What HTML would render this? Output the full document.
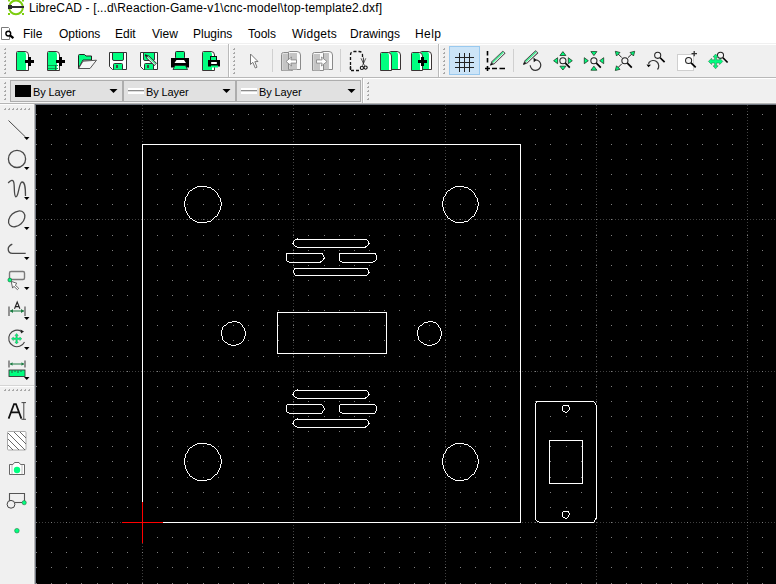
<!DOCTYPE html>
<html><head><meta charset="utf-8">
<style>
*{margin:0;padding:0;box-sizing:border-box}
html,body{width:776px;height:584px;overflow:hidden;background:#f0f0f0;font-family:"Liberation Sans",sans-serif;color:#000}
.a{position:absolute}
.t{position:absolute;white-space:pre;font-size:12px;line-height:14px}
.cb{position:absolute;top:80px;height:22px;background:#e1e1e1;border:1px solid #adadad}
.cbt{position:absolute;white-space:pre;font-size:11px;line-height:13px;top:86px;letter-spacing:-0.12px}
svg{position:absolute;left:0;top:0}
</style></head><body>
<!-- title + menu white band -->
<div class="a" style="left:0;top:0;width:776px;height:43px;background:#fff"></div>
<div class="a" style="left:0;top:44px;width:776px;height:1px;background:#fff"></div>
<div class="a" style="left:0;top:77px;width:776px;height:1px;background:#b8b8b8"></div>
<div class="a" style="left:0;top:78px;width:776px;height:1px;background:#fff"></div>
<div class="a" style="left:0;top:102px;width:776px;height:1px;background:#f5f5f5"></div>
<div class="a" style="left:0;top:103px;width:776px;height:1px;background:#b5b5b5"></div>
<div class="t" style="left:29px;top:1px;letter-spacing:0.135px">LibreCAD - [...d\Reaction-Game-v1\cnc-model\top-template2.dxf]</div>
<div class="t" style="left:23px;top:27px">File</div>
<div class="t" style="left:59px;top:27px">Options</div>
<div class="t" style="left:115px;top:27px">Edit</div>
<div class="t" style="left:152px;top:27px">View</div>
<div class="t" style="left:193px;top:27px">Plugins</div>
<div class="t" style="left:248px;top:27px">Tools</div>
<div class="t" style="left:292px;top:27px;letter-spacing:0.25px">Widgets</div>
<div class="t" style="left:350px;top:27px">Drawings</div>
<div class="t" style="left:415px;top:27px;letter-spacing:0.45px">Help</div>
<!-- toolbar separators -->
<div class="a" style="left:228px;top:44px;width:1px;height:33px;background:#bababa"></div>
<div class="a" style="left:229px;top:45px;width:1px;height:32px;background:#fff"></div>
<div class="a" style="left:438px;top:44px;width:1px;height:33px;background:#bababa"></div>
<div class="a" style="left:439px;top:45px;width:1px;height:32px;background:#fff"></div>
<div class="a" style="left:362px;top:78px;width:1px;height:25px;background:#bababa"></div>
<div class="a" style="left:363px;top:79px;width:1px;height:24px;background:#fff"></div>
<div class="a" style="left:272px;top:49px;width:1px;height:23px;background:#d0d0d0"></div>
<div class="a" style="left:340px;top:49px;width:1px;height:23px;background:#d0d0d0"></div>
<div class="a" style="left:513px;top:49px;width:1px;height:23px;background:#d0d0d0"></div>
<!-- grid button checked -->
<div class="a" style="left:449px;top:46px;width:31px;height:29px;background:#cce4f7;border:1px solid #99c9ef"></div>
<!-- combos -->
<div class="cb" style="left:10px;width:113px"></div>
<div class="cb" style="left:123px;width:113px"></div>
<div class="cb" style="left:236px;width:125px"></div>
<div class="a" style="left:15px;top:85px;width:16px;height:12px;background:#000"></div>
<div class="cbt" style="left:33px">By Layer</div>
<div class="cbt" style="left:146px">By Layer</div>
<div class="cbt" style="left:259px">By Layer</div>
<!-- left toolbar + canvas frame -->
<div class="a" style="left:0;top:104px;width:35px;height:480px;background:#f0f0f0"></div>
<div class="a" style="left:0;top:104px;width:34px;height:1px;background:#fdfdfd"></div>
<div class="a" style="left:33px;top:104px;width:1px;height:480px;background:#f6f6f6"></div>
<div class="a" style="left:34px;top:104px;width:1px;height:480px;background:#b9b9b9"></div>
<div class="a" style="left:0;top:385px;width:34px;height:1px;background:#d5d5d5"></div>
<div class="a" style="left:0;top:386px;width:34px;height:1px;background:#fdfdfd"></div>
<div class="a" style="left:35px;top:104px;width:741px;height:480px;background:#727882"></div>
<div class="a" style="left:36px;top:105px;width:740px;height:479px;background:#000"></div>
<svg width="776" height="584" viewBox="0 0 776 584" shape-rendering="crispEdges">
<path fill="#404040" d="M142 105h1v1h-1zM142 108h1v1h-1zM142 111h1v1h-1zM142 114h1v1h-1zM142 117h1v1h-1zM142 120h1v1h-1zM142 123h1v1h-1zM142 126h1v1h-1zM142 129h1v1h-1zM142 132h1v1h-1zM142 135h1v1h-1zM142 138h1v1h-1zM142 141h1v1h-1zM142 144h1v1h-1zM142 147h1v1h-1zM142 150h1v1h-1zM142 153h1v1h-1zM142 156h1v1h-1zM142 159h1v1h-1zM142 162h1v1h-1zM142 165h1v1h-1zM142 168h1v1h-1zM142 171h1v1h-1zM142 174h1v1h-1zM142 177h1v1h-1zM142 180h1v1h-1zM142 183h1v1h-1zM142 186h1v1h-1zM142 189h1v1h-1zM142 192h1v1h-1zM142 195h1v1h-1zM142 198h1v1h-1zM142 201h1v1h-1zM142 204h1v1h-1zM142 207h1v1h-1zM142 210h1v1h-1zM142 213h1v1h-1zM142 216h1v1h-1zM142 219h1v1h-1zM142 222h1v1h-1zM142 225h1v1h-1zM142 228h1v1h-1zM142 231h1v1h-1zM142 234h1v1h-1zM142 237h1v1h-1zM142 240h1v1h-1zM142 243h1v1h-1zM142 246h1v1h-1zM142 249h1v1h-1zM142 252h1v1h-1zM142 255h1v1h-1zM142 258h1v1h-1zM142 261h1v1h-1zM142 264h1v1h-1zM142 267h1v1h-1zM142 270h1v1h-1zM142 273h1v1h-1zM142 276h1v1h-1zM142 279h1v1h-1zM142 282h1v1h-1zM142 285h1v1h-1zM142 288h1v1h-1zM142 291h1v1h-1zM142 294h1v1h-1zM142 297h1v1h-1zM142 300h1v1h-1zM142 303h1v1h-1zM142 306h1v1h-1zM142 309h1v1h-1zM142 312h1v1h-1zM142 315h1v1h-1zM142 318h1v1h-1zM142 321h1v1h-1zM142 324h1v1h-1zM142 327h1v1h-1zM142 330h1v1h-1zM142 333h1v1h-1zM142 336h1v1h-1zM142 339h1v1h-1zM142 342h1v1h-1zM142 345h1v1h-1zM142 348h1v1h-1zM142 351h1v1h-1zM142 354h1v1h-1zM142 357h1v1h-1zM142 360h1v1h-1zM142 363h1v1h-1zM142 366h1v1h-1zM142 369h1v1h-1zM142 372h1v1h-1zM142 375h1v1h-1zM142 378h1v1h-1zM142 381h1v1h-1zM142 384h1v1h-1zM142 387h1v1h-1zM142 390h1v1h-1zM142 393h1v1h-1zM142 396h1v1h-1zM142 399h1v1h-1zM142 402h1v1h-1zM142 405h1v1h-1zM142 408h1v1h-1zM142 411h1v1h-1zM142 414h1v1h-1zM142 417h1v1h-1zM142 420h1v1h-1zM142 423h1v1h-1zM142 426h1v1h-1zM142 429h1v1h-1zM142 432h1v1h-1zM142 435h1v1h-1zM142 438h1v1h-1zM142 441h1v1h-1zM142 444h1v1h-1zM142 447h1v1h-1zM142 450h1v1h-1zM142 453h1v1h-1zM142 456h1v1h-1zM142 459h1v1h-1zM142 462h1v1h-1zM142 465h1v1h-1zM142 468h1v1h-1zM142 471h1v1h-1zM142 474h1v1h-1zM142 477h1v1h-1zM142 480h1v1h-1zM142 483h1v1h-1zM142 486h1v1h-1zM142 489h1v1h-1zM142 492h1v1h-1zM142 495h1v1h-1zM142 498h1v1h-1zM142 501h1v1h-1zM142 504h1v1h-1zM142 507h1v1h-1zM142 510h1v1h-1zM142 513h1v1h-1zM142 516h1v1h-1zM142 519h1v1h-1zM142 522h1v1h-1zM142 525h1v1h-1zM142 528h1v1h-1zM142 531h1v1h-1zM142 534h1v1h-1zM142 537h1v1h-1zM142 540h1v1h-1zM142 543h1v1h-1zM142 546h1v1h-1zM142 549h1v1h-1zM142 552h1v1h-1zM142 555h1v1h-1zM142 558h1v1h-1zM142 561h1v1h-1zM142 564h1v1h-1zM142 567h1v1h-1zM142 570h1v1h-1zM142 573h1v1h-1zM142 576h1v1h-1zM142 579h1v1h-1zM142 582h1v1h-1zM293 105h1v1h-1zM293 108h1v1h-1zM293 111h1v1h-1zM293 114h1v1h-1zM293 117h1v1h-1zM293 120h1v1h-1zM293 123h1v1h-1zM293 126h1v1h-1zM293 129h1v1h-1zM293 132h1v1h-1zM293 135h1v1h-1zM293 138h1v1h-1zM293 141h1v1h-1zM293 144h1v1h-1zM293 147h1v1h-1zM293 150h1v1h-1zM293 153h1v1h-1zM293 156h1v1h-1zM293 159h1v1h-1zM293 162h1v1h-1zM293 165h1v1h-1zM293 168h1v1h-1zM293 171h1v1h-1zM293 174h1v1h-1zM293 177h1v1h-1zM293 180h1v1h-1zM293 183h1v1h-1zM293 186h1v1h-1zM293 189h1v1h-1zM293 192h1v1h-1zM293 195h1v1h-1zM293 198h1v1h-1zM293 201h1v1h-1zM293 204h1v1h-1zM293 207h1v1h-1zM293 210h1v1h-1zM293 213h1v1h-1zM293 216h1v1h-1zM293 219h1v1h-1zM293 222h1v1h-1zM293 225h1v1h-1zM293 228h1v1h-1zM293 231h1v1h-1zM293 234h1v1h-1zM293 237h1v1h-1zM293 240h1v1h-1zM293 243h1v1h-1zM293 246h1v1h-1zM293 249h1v1h-1zM293 252h1v1h-1zM293 255h1v1h-1zM293 258h1v1h-1zM293 261h1v1h-1zM293 264h1v1h-1zM293 267h1v1h-1zM293 270h1v1h-1zM293 273h1v1h-1zM293 276h1v1h-1zM293 279h1v1h-1zM293 282h1v1h-1zM293 285h1v1h-1zM293 288h1v1h-1zM293 291h1v1h-1zM293 294h1v1h-1zM293 297h1v1h-1zM293 300h1v1h-1zM293 303h1v1h-1zM293 306h1v1h-1zM293 309h1v1h-1zM293 312h1v1h-1zM293 315h1v1h-1zM293 318h1v1h-1zM293 321h1v1h-1zM293 324h1v1h-1zM293 327h1v1h-1zM293 330h1v1h-1zM293 333h1v1h-1zM293 336h1v1h-1zM293 339h1v1h-1zM293 342h1v1h-1zM293 345h1v1h-1zM293 348h1v1h-1zM293 351h1v1h-1zM293 354h1v1h-1zM293 357h1v1h-1zM293 360h1v1h-1zM293 363h1v1h-1zM293 366h1v1h-1zM293 369h1v1h-1zM293 372h1v1h-1zM293 375h1v1h-1zM293 378h1v1h-1zM293 381h1v1h-1zM293 384h1v1h-1zM293 387h1v1h-1zM293 390h1v1h-1zM293 393h1v1h-1zM293 396h1v1h-1zM293 399h1v1h-1zM293 402h1v1h-1zM293 405h1v1h-1zM293 408h1v1h-1zM293 411h1v1h-1zM293 414h1v1h-1zM293 417h1v1h-1zM293 420h1v1h-1zM293 423h1v1h-1zM293 426h1v1h-1zM293 429h1v1h-1zM293 432h1v1h-1zM293 435h1v1h-1zM293 438h1v1h-1zM293 441h1v1h-1zM293 444h1v1h-1zM293 447h1v1h-1zM293 450h1v1h-1zM293 453h1v1h-1zM293 456h1v1h-1zM293 459h1v1h-1zM293 462h1v1h-1zM293 465h1v1h-1zM293 468h1v1h-1zM293 471h1v1h-1zM293 474h1v1h-1zM293 477h1v1h-1zM293 480h1v1h-1zM293 483h1v1h-1zM293 486h1v1h-1zM293 489h1v1h-1zM293 492h1v1h-1zM293 495h1v1h-1zM293 498h1v1h-1zM293 501h1v1h-1zM293 504h1v1h-1zM293 507h1v1h-1zM293 510h1v1h-1zM293 513h1v1h-1zM293 516h1v1h-1zM293 519h1v1h-1zM293 522h1v1h-1zM293 525h1v1h-1zM293 528h1v1h-1zM293 531h1v1h-1zM293 534h1v1h-1zM293 537h1v1h-1zM293 540h1v1h-1zM293 543h1v1h-1zM293 546h1v1h-1zM293 549h1v1h-1zM293 552h1v1h-1zM293 555h1v1h-1zM293 558h1v1h-1zM293 561h1v1h-1zM293 564h1v1h-1zM293 567h1v1h-1zM293 570h1v1h-1zM293 573h1v1h-1zM293 576h1v1h-1zM293 579h1v1h-1zM293 582h1v1h-1zM445 105h1v1h-1zM445 108h1v1h-1zM445 111h1v1h-1zM445 114h1v1h-1zM445 117h1v1h-1zM445 120h1v1h-1zM445 123h1v1h-1zM445 126h1v1h-1zM445 129h1v1h-1zM445 132h1v1h-1zM445 135h1v1h-1zM445 138h1v1h-1zM445 141h1v1h-1zM445 144h1v1h-1zM445 147h1v1h-1zM445 150h1v1h-1zM445 153h1v1h-1zM445 156h1v1h-1zM445 159h1v1h-1zM445 162h1v1h-1zM445 165h1v1h-1zM445 168h1v1h-1zM445 171h1v1h-1zM445 174h1v1h-1zM445 177h1v1h-1zM445 180h1v1h-1zM445 183h1v1h-1zM445 186h1v1h-1zM445 189h1v1h-1zM445 192h1v1h-1zM445 195h1v1h-1zM445 198h1v1h-1zM445 201h1v1h-1zM445 204h1v1h-1zM445 207h1v1h-1zM445 210h1v1h-1zM445 213h1v1h-1zM445 216h1v1h-1zM445 219h1v1h-1zM445 222h1v1h-1zM445 225h1v1h-1zM445 228h1v1h-1zM445 231h1v1h-1zM445 234h1v1h-1zM445 237h1v1h-1zM445 240h1v1h-1zM445 243h1v1h-1zM445 246h1v1h-1zM445 249h1v1h-1zM445 252h1v1h-1zM445 255h1v1h-1zM445 258h1v1h-1zM445 261h1v1h-1zM445 264h1v1h-1zM445 267h1v1h-1zM445 270h1v1h-1zM445 273h1v1h-1zM445 276h1v1h-1zM445 279h1v1h-1zM445 282h1v1h-1zM445 285h1v1h-1zM445 288h1v1h-1zM445 291h1v1h-1zM445 294h1v1h-1zM445 297h1v1h-1zM445 300h1v1h-1zM445 303h1v1h-1zM445 306h1v1h-1zM445 309h1v1h-1zM445 312h1v1h-1zM445 315h1v1h-1zM445 318h1v1h-1zM445 321h1v1h-1zM445 324h1v1h-1zM445 327h1v1h-1zM445 330h1v1h-1zM445 333h1v1h-1zM445 336h1v1h-1zM445 339h1v1h-1zM445 342h1v1h-1zM445 345h1v1h-1zM445 348h1v1h-1zM445 351h1v1h-1zM445 354h1v1h-1zM445 357h1v1h-1zM445 360h1v1h-1zM445 363h1v1h-1zM445 366h1v1h-1zM445 369h1v1h-1zM445 372h1v1h-1zM445 375h1v1h-1zM445 378h1v1h-1zM445 381h1v1h-1zM445 384h1v1h-1zM445 387h1v1h-1zM445 390h1v1h-1zM445 393h1v1h-1zM445 396h1v1h-1zM445 399h1v1h-1zM445 402h1v1h-1zM445 405h1v1h-1zM445 408h1v1h-1zM445 411h1v1h-1zM445 414h1v1h-1zM445 417h1v1h-1zM445 420h1v1h-1zM445 423h1v1h-1zM445 426h1v1h-1zM445 429h1v1h-1zM445 432h1v1h-1zM445 435h1v1h-1zM445 438h1v1h-1zM445 441h1v1h-1zM445 444h1v1h-1zM445 447h1v1h-1zM445 450h1v1h-1zM445 453h1v1h-1zM445 456h1v1h-1zM445 459h1v1h-1zM445 462h1v1h-1zM445 465h1v1h-1zM445 468h1v1h-1zM445 471h1v1h-1zM445 474h1v1h-1zM445 477h1v1h-1zM445 480h1v1h-1zM445 483h1v1h-1zM445 486h1v1h-1zM445 489h1v1h-1zM445 492h1v1h-1zM445 495h1v1h-1zM445 498h1v1h-1zM445 501h1v1h-1zM445 504h1v1h-1zM445 507h1v1h-1zM445 510h1v1h-1zM445 513h1v1h-1zM445 516h1v1h-1zM445 519h1v1h-1zM445 522h1v1h-1zM445 525h1v1h-1zM445 528h1v1h-1zM445 531h1v1h-1zM445 534h1v1h-1zM445 537h1v1h-1zM445 540h1v1h-1zM445 543h1v1h-1zM445 546h1v1h-1zM445 549h1v1h-1zM445 552h1v1h-1zM445 555h1v1h-1zM445 558h1v1h-1zM445 561h1v1h-1zM445 564h1v1h-1zM445 567h1v1h-1zM445 570h1v1h-1zM445 573h1v1h-1zM445 576h1v1h-1zM445 579h1v1h-1zM445 582h1v1h-1zM596 105h1v1h-1zM596 108h1v1h-1zM596 111h1v1h-1zM596 114h1v1h-1zM596 117h1v1h-1zM596 120h1v1h-1zM596 123h1v1h-1zM596 126h1v1h-1zM596 129h1v1h-1zM596 132h1v1h-1zM596 135h1v1h-1zM596 138h1v1h-1zM596 141h1v1h-1zM596 144h1v1h-1zM596 147h1v1h-1zM596 150h1v1h-1zM596 153h1v1h-1zM596 156h1v1h-1zM596 159h1v1h-1zM596 162h1v1h-1zM596 165h1v1h-1zM596 168h1v1h-1zM596 171h1v1h-1zM596 174h1v1h-1zM596 177h1v1h-1zM596 180h1v1h-1zM596 183h1v1h-1zM596 186h1v1h-1zM596 189h1v1h-1zM596 192h1v1h-1zM596 195h1v1h-1zM596 198h1v1h-1zM596 201h1v1h-1zM596 204h1v1h-1zM596 207h1v1h-1zM596 210h1v1h-1zM596 213h1v1h-1zM596 216h1v1h-1zM596 219h1v1h-1zM596 222h1v1h-1zM596 225h1v1h-1zM596 228h1v1h-1zM596 231h1v1h-1zM596 234h1v1h-1zM596 237h1v1h-1zM596 240h1v1h-1zM596 243h1v1h-1zM596 246h1v1h-1zM596 249h1v1h-1zM596 252h1v1h-1zM596 255h1v1h-1zM596 258h1v1h-1zM596 261h1v1h-1zM596 264h1v1h-1zM596 267h1v1h-1zM596 270h1v1h-1zM596 273h1v1h-1zM596 276h1v1h-1zM596 279h1v1h-1zM596 282h1v1h-1zM596 285h1v1h-1zM596 288h1v1h-1zM596 291h1v1h-1zM596 294h1v1h-1zM596 297h1v1h-1zM596 300h1v1h-1zM596 303h1v1h-1zM596 306h1v1h-1zM596 309h1v1h-1zM596 312h1v1h-1zM596 315h1v1h-1zM596 318h1v1h-1zM596 321h1v1h-1zM596 324h1v1h-1zM596 327h1v1h-1zM596 330h1v1h-1zM596 333h1v1h-1zM596 336h1v1h-1zM596 339h1v1h-1zM596 342h1v1h-1zM596 345h1v1h-1zM596 348h1v1h-1zM596 351h1v1h-1zM596 354h1v1h-1zM596 357h1v1h-1zM596 360h1v1h-1zM596 363h1v1h-1zM596 366h1v1h-1zM596 369h1v1h-1zM596 372h1v1h-1zM596 375h1v1h-1zM596 378h1v1h-1zM596 381h1v1h-1zM596 384h1v1h-1zM596 387h1v1h-1zM596 390h1v1h-1zM596 393h1v1h-1zM596 396h1v1h-1zM596 399h1v1h-1zM596 402h1v1h-1zM596 405h1v1h-1zM596 408h1v1h-1zM596 411h1v1h-1zM596 414h1v1h-1zM596 417h1v1h-1zM596 420h1v1h-1zM596 423h1v1h-1zM596 426h1v1h-1zM596 429h1v1h-1zM596 432h1v1h-1zM596 435h1v1h-1zM596 438h1v1h-1zM596 441h1v1h-1zM596 444h1v1h-1zM596 447h1v1h-1zM596 450h1v1h-1zM596 453h1v1h-1zM596 456h1v1h-1zM596 459h1v1h-1zM596 462h1v1h-1zM596 465h1v1h-1zM596 468h1v1h-1zM596 471h1v1h-1zM596 474h1v1h-1zM596 477h1v1h-1zM596 480h1v1h-1zM596 483h1v1h-1zM596 486h1v1h-1zM596 489h1v1h-1zM596 492h1v1h-1zM596 495h1v1h-1zM596 498h1v1h-1zM596 501h1v1h-1zM596 504h1v1h-1zM596 507h1v1h-1zM596 510h1v1h-1zM596 513h1v1h-1zM596 516h1v1h-1zM596 519h1v1h-1zM596 522h1v1h-1zM596 525h1v1h-1zM596 528h1v1h-1zM596 531h1v1h-1zM596 534h1v1h-1zM596 537h1v1h-1zM596 540h1v1h-1zM596 543h1v1h-1zM596 546h1v1h-1zM596 549h1v1h-1zM596 552h1v1h-1zM596 555h1v1h-1zM596 558h1v1h-1zM596 561h1v1h-1zM596 564h1v1h-1zM596 567h1v1h-1zM596 570h1v1h-1zM596 573h1v1h-1zM596 576h1v1h-1zM596 579h1v1h-1zM596 582h1v1h-1zM747 105h1v1h-1zM747 108h1v1h-1zM747 111h1v1h-1zM747 114h1v1h-1zM747 117h1v1h-1zM747 120h1v1h-1zM747 123h1v1h-1zM747 126h1v1h-1zM747 129h1v1h-1zM747 132h1v1h-1zM747 135h1v1h-1zM747 138h1v1h-1zM747 141h1v1h-1zM747 144h1v1h-1zM747 147h1v1h-1zM747 150h1v1h-1zM747 153h1v1h-1zM747 156h1v1h-1zM747 159h1v1h-1zM747 162h1v1h-1zM747 165h1v1h-1zM747 168h1v1h-1zM747 171h1v1h-1zM747 174h1v1h-1zM747 177h1v1h-1zM747 180h1v1h-1zM747 183h1v1h-1zM747 186h1v1h-1zM747 189h1v1h-1zM747 192h1v1h-1zM747 195h1v1h-1zM747 198h1v1h-1zM747 201h1v1h-1zM747 204h1v1h-1zM747 207h1v1h-1zM747 210h1v1h-1zM747 213h1v1h-1zM747 216h1v1h-1zM747 219h1v1h-1zM747 222h1v1h-1zM747 225h1v1h-1zM747 228h1v1h-1zM747 231h1v1h-1zM747 234h1v1h-1zM747 237h1v1h-1zM747 240h1v1h-1zM747 243h1v1h-1zM747 246h1v1h-1zM747 249h1v1h-1zM747 252h1v1h-1zM747 255h1v1h-1zM747 258h1v1h-1zM747 261h1v1h-1zM747 264h1v1h-1zM747 267h1v1h-1zM747 270h1v1h-1zM747 273h1v1h-1zM747 276h1v1h-1zM747 279h1v1h-1zM747 282h1v1h-1zM747 285h1v1h-1zM747 288h1v1h-1zM747 291h1v1h-1zM747 294h1v1h-1zM747 297h1v1h-1zM747 300h1v1h-1zM747 303h1v1h-1zM747 306h1v1h-1zM747 309h1v1h-1zM747 312h1v1h-1zM747 315h1v1h-1zM747 318h1v1h-1zM747 321h1v1h-1zM747 324h1v1h-1zM747 327h1v1h-1zM747 330h1v1h-1zM747 333h1v1h-1zM747 336h1v1h-1zM747 339h1v1h-1zM747 342h1v1h-1zM747 345h1v1h-1zM747 348h1v1h-1zM747 351h1v1h-1zM747 354h1v1h-1zM747 357h1v1h-1zM747 360h1v1h-1zM747 363h1v1h-1zM747 366h1v1h-1zM747 369h1v1h-1zM747 372h1v1h-1zM747 375h1v1h-1zM747 378h1v1h-1zM747 381h1v1h-1zM747 384h1v1h-1zM747 387h1v1h-1zM747 390h1v1h-1zM747 393h1v1h-1zM747 396h1v1h-1zM747 399h1v1h-1zM747 402h1v1h-1zM747 405h1v1h-1zM747 408h1v1h-1zM747 411h1v1h-1zM747 414h1v1h-1zM747 417h1v1h-1zM747 420h1v1h-1zM747 423h1v1h-1zM747 426h1v1h-1zM747 429h1v1h-1zM747 432h1v1h-1zM747 435h1v1h-1zM747 438h1v1h-1zM747 441h1v1h-1zM747 444h1v1h-1zM747 447h1v1h-1zM747 450h1v1h-1zM747 453h1v1h-1zM747 456h1v1h-1zM747 459h1v1h-1zM747 462h1v1h-1zM747 465h1v1h-1zM747 468h1v1h-1zM747 471h1v1h-1zM747 474h1v1h-1zM747 477h1v1h-1zM747 480h1v1h-1zM747 483h1v1h-1zM747 486h1v1h-1zM747 489h1v1h-1zM747 492h1v1h-1zM747 495h1v1h-1zM747 498h1v1h-1zM747 501h1v1h-1zM747 504h1v1h-1zM747 507h1v1h-1zM747 510h1v1h-1zM747 513h1v1h-1zM747 516h1v1h-1zM747 519h1v1h-1zM747 522h1v1h-1zM747 525h1v1h-1zM747 528h1v1h-1zM747 531h1v1h-1zM747 534h1v1h-1zM747 537h1v1h-1zM747 540h1v1h-1zM747 543h1v1h-1zM747 546h1v1h-1zM747 549h1v1h-1zM747 552h1v1h-1zM747 555h1v1h-1zM747 558h1v1h-1zM747 561h1v1h-1zM747 564h1v1h-1zM747 567h1v1h-1zM747 570h1v1h-1zM747 573h1v1h-1zM747 576h1v1h-1zM747 579h1v1h-1zM747 582h1v1h-1zM36 522h1v1h-1zM39 522h1v1h-1zM42 522h1v1h-1zM45 522h1v1h-1zM48 522h1v1h-1zM51 522h1v1h-1zM54 522h1v1h-1zM57 522h1v1h-1zM60 522h1v1h-1zM63 522h1v1h-1zM66 522h1v1h-1zM69 522h1v1h-1zM72 522h1v1h-1zM75 522h1v1h-1zM78 522h1v1h-1zM81 522h1v1h-1zM84 522h1v1h-1zM87 522h1v1h-1zM90 522h1v1h-1zM93 522h1v1h-1zM96 522h1v1h-1zM99 522h1v1h-1zM102 522h1v1h-1zM105 522h1v1h-1zM108 522h1v1h-1zM111 522h1v1h-1zM114 522h1v1h-1zM117 522h1v1h-1zM120 522h1v1h-1zM123 522h1v1h-1zM126 522h1v1h-1zM129 522h1v1h-1zM132 522h1v1h-1zM135 522h1v1h-1zM138 522h1v1h-1zM141 522h1v1h-1zM144 522h1v1h-1zM147 522h1v1h-1zM150 522h1v1h-1zM153 522h1v1h-1zM156 522h1v1h-1zM159 522h1v1h-1zM162 522h1v1h-1zM165 522h1v1h-1zM168 522h1v1h-1zM171 522h1v1h-1zM174 522h1v1h-1zM177 522h1v1h-1zM180 522h1v1h-1zM183 522h1v1h-1zM186 522h1v1h-1zM189 522h1v1h-1zM192 522h1v1h-1zM195 522h1v1h-1zM198 522h1v1h-1zM201 522h1v1h-1zM204 522h1v1h-1zM207 522h1v1h-1zM210 522h1v1h-1zM213 522h1v1h-1zM216 522h1v1h-1zM219 522h1v1h-1zM222 522h1v1h-1zM225 522h1v1h-1zM228 522h1v1h-1zM231 522h1v1h-1zM234 522h1v1h-1zM237 522h1v1h-1zM240 522h1v1h-1zM243 522h1v1h-1zM246 522h1v1h-1zM249 522h1v1h-1zM252 522h1v1h-1zM255 522h1v1h-1zM258 522h1v1h-1zM261 522h1v1h-1zM264 522h1v1h-1zM267 522h1v1h-1zM270 522h1v1h-1zM273 522h1v1h-1zM276 522h1v1h-1zM279 522h1v1h-1zM282 522h1v1h-1zM285 522h1v1h-1zM288 522h1v1h-1zM291 522h1v1h-1zM294 522h1v1h-1zM297 522h1v1h-1zM300 522h1v1h-1zM303 522h1v1h-1zM306 522h1v1h-1zM309 522h1v1h-1zM312 522h1v1h-1zM315 522h1v1h-1zM318 522h1v1h-1zM321 522h1v1h-1zM324 522h1v1h-1zM327 522h1v1h-1zM330 522h1v1h-1zM333 522h1v1h-1zM336 522h1v1h-1zM339 522h1v1h-1zM342 522h1v1h-1zM345 522h1v1h-1zM348 522h1v1h-1zM351 522h1v1h-1zM354 522h1v1h-1zM357 522h1v1h-1zM360 522h1v1h-1zM363 522h1v1h-1zM366 522h1v1h-1zM369 522h1v1h-1zM372 522h1v1h-1zM375 522h1v1h-1zM378 522h1v1h-1zM381 522h1v1h-1zM384 522h1v1h-1zM387 522h1v1h-1zM390 522h1v1h-1zM393 522h1v1h-1zM396 522h1v1h-1zM399 522h1v1h-1zM402 522h1v1h-1zM405 522h1v1h-1zM408 522h1v1h-1zM411 522h1v1h-1zM414 522h1v1h-1zM417 522h1v1h-1zM420 522h1v1h-1zM423 522h1v1h-1zM426 522h1v1h-1zM429 522h1v1h-1zM432 522h1v1h-1zM435 522h1v1h-1zM438 522h1v1h-1zM441 522h1v1h-1zM444 522h1v1h-1zM447 522h1v1h-1zM450 522h1v1h-1zM453 522h1v1h-1zM456 522h1v1h-1zM459 522h1v1h-1zM462 522h1v1h-1zM465 522h1v1h-1zM468 522h1v1h-1zM471 522h1v1h-1zM474 522h1v1h-1zM477 522h1v1h-1zM480 522h1v1h-1zM483 522h1v1h-1zM486 522h1v1h-1zM489 522h1v1h-1zM492 522h1v1h-1zM495 522h1v1h-1zM498 522h1v1h-1zM501 522h1v1h-1zM504 522h1v1h-1zM507 522h1v1h-1zM510 522h1v1h-1zM513 522h1v1h-1zM516 522h1v1h-1zM519 522h1v1h-1zM522 522h1v1h-1zM525 522h1v1h-1zM528 522h1v1h-1zM531 522h1v1h-1zM534 522h1v1h-1zM537 522h1v1h-1zM540 522h1v1h-1zM543 522h1v1h-1zM546 522h1v1h-1zM549 522h1v1h-1zM552 522h1v1h-1zM555 522h1v1h-1zM558 522h1v1h-1zM561 522h1v1h-1zM564 522h1v1h-1zM567 522h1v1h-1zM570 522h1v1h-1zM573 522h1v1h-1zM576 522h1v1h-1zM579 522h1v1h-1zM582 522h1v1h-1zM585 522h1v1h-1zM588 522h1v1h-1zM591 522h1v1h-1zM594 522h1v1h-1zM597 522h1v1h-1zM600 522h1v1h-1zM603 522h1v1h-1zM606 522h1v1h-1zM609 522h1v1h-1zM612 522h1v1h-1zM615 522h1v1h-1zM618 522h1v1h-1zM621 522h1v1h-1zM624 522h1v1h-1zM627 522h1v1h-1zM630 522h1v1h-1zM633 522h1v1h-1zM636 522h1v1h-1zM639 522h1v1h-1zM642 522h1v1h-1zM645 522h1v1h-1zM648 522h1v1h-1zM651 522h1v1h-1zM654 522h1v1h-1zM657 522h1v1h-1zM660 522h1v1h-1zM663 522h1v1h-1zM666 522h1v1h-1zM669 522h1v1h-1zM672 522h1v1h-1zM675 522h1v1h-1zM678 522h1v1h-1zM681 522h1v1h-1zM684 522h1v1h-1zM687 522h1v1h-1zM690 522h1v1h-1zM693 522h1v1h-1zM696 522h1v1h-1zM699 522h1v1h-1zM702 522h1v1h-1zM705 522h1v1h-1zM708 522h1v1h-1zM711 522h1v1h-1zM714 522h1v1h-1zM717 522h1v1h-1zM720 522h1v1h-1zM723 522h1v1h-1zM726 522h1v1h-1zM729 522h1v1h-1zM732 522h1v1h-1zM735 522h1v1h-1zM738 522h1v1h-1zM741 522h1v1h-1zM744 522h1v1h-1zM747 522h1v1h-1zM750 522h1v1h-1zM753 522h1v1h-1zM756 522h1v1h-1zM759 522h1v1h-1zM762 522h1v1h-1zM765 522h1v1h-1zM768 522h1v1h-1zM771 522h1v1h-1zM774 522h1v1h-1zM36 371h1v1h-1zM39 371h1v1h-1zM42 371h1v1h-1zM45 371h1v1h-1zM48 371h1v1h-1zM51 371h1v1h-1zM54 371h1v1h-1zM57 371h1v1h-1zM60 371h1v1h-1zM63 371h1v1h-1zM66 371h1v1h-1zM69 371h1v1h-1zM72 371h1v1h-1zM75 371h1v1h-1zM78 371h1v1h-1zM81 371h1v1h-1zM84 371h1v1h-1zM87 371h1v1h-1zM90 371h1v1h-1zM93 371h1v1h-1zM96 371h1v1h-1zM99 371h1v1h-1zM102 371h1v1h-1zM105 371h1v1h-1zM108 371h1v1h-1zM111 371h1v1h-1zM114 371h1v1h-1zM117 371h1v1h-1zM120 371h1v1h-1zM123 371h1v1h-1zM126 371h1v1h-1zM129 371h1v1h-1zM132 371h1v1h-1zM135 371h1v1h-1zM138 371h1v1h-1zM141 371h1v1h-1zM144 371h1v1h-1zM147 371h1v1h-1zM150 371h1v1h-1zM153 371h1v1h-1zM156 371h1v1h-1zM159 371h1v1h-1zM162 371h1v1h-1zM165 371h1v1h-1zM168 371h1v1h-1zM171 371h1v1h-1zM174 371h1v1h-1zM177 371h1v1h-1zM180 371h1v1h-1zM183 371h1v1h-1zM186 371h1v1h-1zM189 371h1v1h-1zM192 371h1v1h-1zM195 371h1v1h-1zM198 371h1v1h-1zM201 371h1v1h-1zM204 371h1v1h-1zM207 371h1v1h-1zM210 371h1v1h-1zM213 371h1v1h-1zM216 371h1v1h-1zM219 371h1v1h-1zM222 371h1v1h-1zM225 371h1v1h-1zM228 371h1v1h-1zM231 371h1v1h-1zM234 371h1v1h-1zM237 371h1v1h-1zM240 371h1v1h-1zM243 371h1v1h-1zM246 371h1v1h-1zM249 371h1v1h-1zM252 371h1v1h-1zM255 371h1v1h-1zM258 371h1v1h-1zM261 371h1v1h-1zM264 371h1v1h-1zM267 371h1v1h-1zM270 371h1v1h-1zM273 371h1v1h-1zM276 371h1v1h-1zM279 371h1v1h-1zM282 371h1v1h-1zM285 371h1v1h-1zM288 371h1v1h-1zM291 371h1v1h-1zM294 371h1v1h-1zM297 371h1v1h-1zM300 371h1v1h-1zM303 371h1v1h-1zM306 371h1v1h-1zM309 371h1v1h-1zM312 371h1v1h-1zM315 371h1v1h-1zM318 371h1v1h-1zM321 371h1v1h-1zM324 371h1v1h-1zM327 371h1v1h-1zM330 371h1v1h-1zM333 371h1v1h-1zM336 371h1v1h-1zM339 371h1v1h-1zM342 371h1v1h-1zM345 371h1v1h-1zM348 371h1v1h-1zM351 371h1v1h-1zM354 371h1v1h-1zM357 371h1v1h-1zM360 371h1v1h-1zM363 371h1v1h-1zM366 371h1v1h-1zM369 371h1v1h-1zM372 371h1v1h-1zM375 371h1v1h-1zM378 371h1v1h-1zM381 371h1v1h-1zM384 371h1v1h-1zM387 371h1v1h-1zM390 371h1v1h-1zM393 371h1v1h-1zM396 371h1v1h-1zM399 371h1v1h-1zM402 371h1v1h-1zM405 371h1v1h-1zM408 371h1v1h-1zM411 371h1v1h-1zM414 371h1v1h-1zM417 371h1v1h-1zM420 371h1v1h-1zM423 371h1v1h-1zM426 371h1v1h-1zM429 371h1v1h-1zM432 371h1v1h-1zM435 371h1v1h-1zM438 371h1v1h-1zM441 371h1v1h-1zM444 371h1v1h-1zM447 371h1v1h-1zM450 371h1v1h-1zM453 371h1v1h-1zM456 371h1v1h-1zM459 371h1v1h-1zM462 371h1v1h-1zM465 371h1v1h-1zM468 371h1v1h-1zM471 371h1v1h-1zM474 371h1v1h-1zM477 371h1v1h-1zM480 371h1v1h-1zM483 371h1v1h-1zM486 371h1v1h-1zM489 371h1v1h-1zM492 371h1v1h-1zM495 371h1v1h-1zM498 371h1v1h-1zM501 371h1v1h-1zM504 371h1v1h-1zM507 371h1v1h-1zM510 371h1v1h-1zM513 371h1v1h-1zM516 371h1v1h-1zM519 371h1v1h-1zM522 371h1v1h-1zM525 371h1v1h-1zM528 371h1v1h-1zM531 371h1v1h-1zM534 371h1v1h-1zM537 371h1v1h-1zM540 371h1v1h-1zM543 371h1v1h-1zM546 371h1v1h-1zM549 371h1v1h-1zM552 371h1v1h-1zM555 371h1v1h-1zM558 371h1v1h-1zM561 371h1v1h-1zM564 371h1v1h-1zM567 371h1v1h-1zM570 371h1v1h-1zM573 371h1v1h-1zM576 371h1v1h-1zM579 371h1v1h-1zM582 371h1v1h-1zM585 371h1v1h-1zM588 371h1v1h-1zM591 371h1v1h-1zM594 371h1v1h-1zM597 371h1v1h-1zM600 371h1v1h-1zM603 371h1v1h-1zM606 371h1v1h-1zM609 371h1v1h-1zM612 371h1v1h-1zM615 371h1v1h-1zM618 371h1v1h-1zM621 371h1v1h-1zM624 371h1v1h-1zM627 371h1v1h-1zM630 371h1v1h-1zM633 371h1v1h-1zM636 371h1v1h-1zM639 371h1v1h-1zM642 371h1v1h-1zM645 371h1v1h-1zM648 371h1v1h-1zM651 371h1v1h-1zM654 371h1v1h-1zM657 371h1v1h-1zM660 371h1v1h-1zM663 371h1v1h-1zM666 371h1v1h-1zM669 371h1v1h-1zM672 371h1v1h-1zM675 371h1v1h-1zM678 371h1v1h-1zM681 371h1v1h-1zM684 371h1v1h-1zM687 371h1v1h-1zM690 371h1v1h-1zM693 371h1v1h-1zM696 371h1v1h-1zM699 371h1v1h-1zM702 371h1v1h-1zM705 371h1v1h-1zM708 371h1v1h-1zM711 371h1v1h-1zM714 371h1v1h-1zM717 371h1v1h-1zM720 371h1v1h-1zM723 371h1v1h-1zM726 371h1v1h-1zM729 371h1v1h-1zM732 371h1v1h-1zM735 371h1v1h-1zM738 371h1v1h-1zM741 371h1v1h-1zM744 371h1v1h-1zM747 371h1v1h-1zM750 371h1v1h-1zM753 371h1v1h-1zM756 371h1v1h-1zM759 371h1v1h-1zM762 371h1v1h-1zM765 371h1v1h-1zM768 371h1v1h-1zM771 371h1v1h-1zM774 371h1v1h-1zM36 219h1v1h-1zM39 219h1v1h-1zM42 219h1v1h-1zM45 219h1v1h-1zM48 219h1v1h-1zM51 219h1v1h-1zM54 219h1v1h-1zM57 219h1v1h-1zM60 219h1v1h-1zM63 219h1v1h-1zM66 219h1v1h-1zM69 219h1v1h-1zM72 219h1v1h-1zM75 219h1v1h-1zM78 219h1v1h-1zM81 219h1v1h-1zM84 219h1v1h-1zM87 219h1v1h-1zM90 219h1v1h-1zM93 219h1v1h-1zM96 219h1v1h-1zM99 219h1v1h-1zM102 219h1v1h-1zM105 219h1v1h-1zM108 219h1v1h-1zM111 219h1v1h-1zM114 219h1v1h-1zM117 219h1v1h-1zM120 219h1v1h-1zM123 219h1v1h-1zM126 219h1v1h-1zM129 219h1v1h-1zM132 219h1v1h-1zM135 219h1v1h-1zM138 219h1v1h-1zM141 219h1v1h-1zM144 219h1v1h-1zM147 219h1v1h-1zM150 219h1v1h-1zM153 219h1v1h-1zM156 219h1v1h-1zM159 219h1v1h-1zM162 219h1v1h-1zM165 219h1v1h-1zM168 219h1v1h-1zM171 219h1v1h-1zM174 219h1v1h-1zM177 219h1v1h-1zM180 219h1v1h-1zM183 219h1v1h-1zM186 219h1v1h-1zM189 219h1v1h-1zM192 219h1v1h-1zM195 219h1v1h-1zM198 219h1v1h-1zM201 219h1v1h-1zM204 219h1v1h-1zM207 219h1v1h-1zM210 219h1v1h-1zM213 219h1v1h-1zM216 219h1v1h-1zM219 219h1v1h-1zM222 219h1v1h-1zM225 219h1v1h-1zM228 219h1v1h-1zM231 219h1v1h-1zM234 219h1v1h-1zM237 219h1v1h-1zM240 219h1v1h-1zM243 219h1v1h-1zM246 219h1v1h-1zM249 219h1v1h-1zM252 219h1v1h-1zM255 219h1v1h-1zM258 219h1v1h-1zM261 219h1v1h-1zM264 219h1v1h-1zM267 219h1v1h-1zM270 219h1v1h-1zM273 219h1v1h-1zM276 219h1v1h-1zM279 219h1v1h-1zM282 219h1v1h-1zM285 219h1v1h-1zM288 219h1v1h-1zM291 219h1v1h-1zM294 219h1v1h-1zM297 219h1v1h-1zM300 219h1v1h-1zM303 219h1v1h-1zM306 219h1v1h-1zM309 219h1v1h-1zM312 219h1v1h-1zM315 219h1v1h-1zM318 219h1v1h-1zM321 219h1v1h-1zM324 219h1v1h-1zM327 219h1v1h-1zM330 219h1v1h-1zM333 219h1v1h-1zM336 219h1v1h-1zM339 219h1v1h-1zM342 219h1v1h-1zM345 219h1v1h-1zM348 219h1v1h-1zM351 219h1v1h-1zM354 219h1v1h-1zM357 219h1v1h-1zM360 219h1v1h-1zM363 219h1v1h-1zM366 219h1v1h-1zM369 219h1v1h-1zM372 219h1v1h-1zM375 219h1v1h-1zM378 219h1v1h-1zM381 219h1v1h-1zM384 219h1v1h-1zM387 219h1v1h-1zM390 219h1v1h-1zM393 219h1v1h-1zM396 219h1v1h-1zM399 219h1v1h-1zM402 219h1v1h-1zM405 219h1v1h-1zM408 219h1v1h-1zM411 219h1v1h-1zM414 219h1v1h-1zM417 219h1v1h-1zM420 219h1v1h-1zM423 219h1v1h-1zM426 219h1v1h-1zM429 219h1v1h-1zM432 219h1v1h-1zM435 219h1v1h-1zM438 219h1v1h-1zM441 219h1v1h-1zM444 219h1v1h-1zM447 219h1v1h-1zM450 219h1v1h-1zM453 219h1v1h-1zM456 219h1v1h-1zM459 219h1v1h-1zM462 219h1v1h-1zM465 219h1v1h-1zM468 219h1v1h-1zM471 219h1v1h-1zM474 219h1v1h-1zM477 219h1v1h-1zM480 219h1v1h-1zM483 219h1v1h-1zM486 219h1v1h-1zM489 219h1v1h-1zM492 219h1v1h-1zM495 219h1v1h-1zM498 219h1v1h-1zM501 219h1v1h-1zM504 219h1v1h-1zM507 219h1v1h-1zM510 219h1v1h-1zM513 219h1v1h-1zM516 219h1v1h-1zM519 219h1v1h-1zM522 219h1v1h-1zM525 219h1v1h-1zM528 219h1v1h-1zM531 219h1v1h-1zM534 219h1v1h-1zM537 219h1v1h-1zM540 219h1v1h-1zM543 219h1v1h-1zM546 219h1v1h-1zM549 219h1v1h-1zM552 219h1v1h-1zM555 219h1v1h-1zM558 219h1v1h-1zM561 219h1v1h-1zM564 219h1v1h-1zM567 219h1v1h-1zM570 219h1v1h-1zM573 219h1v1h-1zM576 219h1v1h-1zM579 219h1v1h-1zM582 219h1v1h-1zM585 219h1v1h-1zM588 219h1v1h-1zM591 219h1v1h-1zM594 219h1v1h-1zM597 219h1v1h-1zM600 219h1v1h-1zM603 219h1v1h-1zM606 219h1v1h-1zM609 219h1v1h-1zM612 219h1v1h-1zM615 219h1v1h-1zM618 219h1v1h-1zM621 219h1v1h-1zM624 219h1v1h-1zM627 219h1v1h-1zM630 219h1v1h-1zM633 219h1v1h-1zM636 219h1v1h-1zM639 219h1v1h-1zM642 219h1v1h-1zM645 219h1v1h-1zM648 219h1v1h-1zM651 219h1v1h-1zM654 219h1v1h-1zM657 219h1v1h-1zM660 219h1v1h-1zM663 219h1v1h-1zM666 219h1v1h-1zM669 219h1v1h-1zM672 219h1v1h-1zM675 219h1v1h-1zM678 219h1v1h-1zM681 219h1v1h-1zM684 219h1v1h-1zM687 219h1v1h-1zM690 219h1v1h-1zM693 219h1v1h-1zM696 219h1v1h-1zM699 219h1v1h-1zM702 219h1v1h-1zM705 219h1v1h-1zM708 219h1v1h-1zM711 219h1v1h-1zM714 219h1v1h-1zM717 219h1v1h-1zM720 219h1v1h-1zM723 219h1v1h-1zM726 219h1v1h-1zM729 219h1v1h-1zM732 219h1v1h-1zM735 219h1v1h-1zM738 219h1v1h-1zM741 219h1v1h-1zM744 219h1v1h-1zM747 219h1v1h-1zM750 219h1v1h-1zM753 219h1v1h-1zM756 219h1v1h-1zM759 219h1v1h-1zM762 219h1v1h-1zM765 219h1v1h-1zM768 219h1v1h-1zM771 219h1v1h-1zM774 219h1v1h-1z"/>
<path fill="#808080" d="M36 583h1v1h-1zM36 567h1v1h-1zM36 552h1v1h-1zM36 537h1v1h-1zM36 522h1v1h-1zM36 507h1v1h-1zM36 492h1v1h-1zM36 477h1v1h-1zM36 461h1v1h-1zM36 446h1v1h-1zM36 431h1v1h-1zM36 416h1v1h-1zM36 401h1v1h-1zM36 386h1v1h-1zM36 371h1v1h-1zM36 356h1v1h-1zM36 340h1v1h-1zM36 325h1v1h-1zM36 310h1v1h-1zM36 295h1v1h-1zM36 280h1v1h-1zM36 265h1v1h-1zM36 250h1v1h-1zM36 235h1v1h-1zM36 219h1v1h-1zM36 204h1v1h-1zM36 189h1v1h-1zM36 174h1v1h-1zM36 159h1v1h-1zM36 144h1v1h-1zM36 129h1v1h-1zM36 114h1v1h-1zM51 583h1v1h-1zM51 567h1v1h-1zM51 552h1v1h-1zM51 537h1v1h-1zM51 522h1v1h-1zM51 507h1v1h-1zM51 492h1v1h-1zM51 477h1v1h-1zM51 461h1v1h-1zM51 446h1v1h-1zM51 431h1v1h-1zM51 416h1v1h-1zM51 401h1v1h-1zM51 386h1v1h-1zM51 371h1v1h-1zM51 356h1v1h-1zM51 340h1v1h-1zM51 325h1v1h-1zM51 310h1v1h-1zM51 295h1v1h-1zM51 280h1v1h-1zM51 265h1v1h-1zM51 250h1v1h-1zM51 235h1v1h-1zM51 219h1v1h-1zM51 204h1v1h-1zM51 189h1v1h-1zM51 174h1v1h-1zM51 159h1v1h-1zM51 144h1v1h-1zM51 129h1v1h-1zM51 114h1v1h-1zM66 583h1v1h-1zM66 567h1v1h-1zM66 552h1v1h-1zM66 537h1v1h-1zM66 522h1v1h-1zM66 507h1v1h-1zM66 492h1v1h-1zM66 477h1v1h-1zM66 461h1v1h-1zM66 446h1v1h-1zM66 431h1v1h-1zM66 416h1v1h-1zM66 401h1v1h-1zM66 386h1v1h-1zM66 371h1v1h-1zM66 356h1v1h-1zM66 340h1v1h-1zM66 325h1v1h-1zM66 310h1v1h-1zM66 295h1v1h-1zM66 280h1v1h-1zM66 265h1v1h-1zM66 250h1v1h-1zM66 235h1v1h-1zM66 219h1v1h-1zM66 204h1v1h-1zM66 189h1v1h-1zM66 174h1v1h-1zM66 159h1v1h-1zM66 144h1v1h-1zM66 129h1v1h-1zM66 114h1v1h-1zM81 583h1v1h-1zM81 567h1v1h-1zM81 552h1v1h-1zM81 537h1v1h-1zM81 522h1v1h-1zM81 507h1v1h-1zM81 492h1v1h-1zM81 477h1v1h-1zM81 461h1v1h-1zM81 446h1v1h-1zM81 431h1v1h-1zM81 416h1v1h-1zM81 401h1v1h-1zM81 386h1v1h-1zM81 371h1v1h-1zM81 356h1v1h-1zM81 340h1v1h-1zM81 325h1v1h-1zM81 310h1v1h-1zM81 295h1v1h-1zM81 280h1v1h-1zM81 265h1v1h-1zM81 250h1v1h-1zM81 235h1v1h-1zM81 219h1v1h-1zM81 204h1v1h-1zM81 189h1v1h-1zM81 174h1v1h-1zM81 159h1v1h-1zM81 144h1v1h-1zM81 129h1v1h-1zM81 114h1v1h-1zM97 583h1v1h-1zM97 567h1v1h-1zM97 552h1v1h-1zM97 537h1v1h-1zM97 522h1v1h-1zM97 507h1v1h-1zM97 492h1v1h-1zM97 477h1v1h-1zM97 461h1v1h-1zM97 446h1v1h-1zM97 431h1v1h-1zM97 416h1v1h-1zM97 401h1v1h-1zM97 386h1v1h-1zM97 371h1v1h-1zM97 356h1v1h-1zM97 340h1v1h-1zM97 325h1v1h-1zM97 310h1v1h-1zM97 295h1v1h-1zM97 280h1v1h-1zM97 265h1v1h-1zM97 250h1v1h-1zM97 235h1v1h-1zM97 219h1v1h-1zM97 204h1v1h-1zM97 189h1v1h-1zM97 174h1v1h-1zM97 159h1v1h-1zM97 144h1v1h-1zM97 129h1v1h-1zM97 114h1v1h-1zM112 583h1v1h-1zM112 567h1v1h-1zM112 552h1v1h-1zM112 537h1v1h-1zM112 522h1v1h-1zM112 507h1v1h-1zM112 492h1v1h-1zM112 477h1v1h-1zM112 461h1v1h-1zM112 446h1v1h-1zM112 431h1v1h-1zM112 416h1v1h-1zM112 401h1v1h-1zM112 386h1v1h-1zM112 371h1v1h-1zM112 356h1v1h-1zM112 340h1v1h-1zM112 325h1v1h-1zM112 310h1v1h-1zM112 295h1v1h-1zM112 280h1v1h-1zM112 265h1v1h-1zM112 250h1v1h-1zM112 235h1v1h-1zM112 219h1v1h-1zM112 204h1v1h-1zM112 189h1v1h-1zM112 174h1v1h-1zM112 159h1v1h-1zM112 144h1v1h-1zM112 129h1v1h-1zM112 114h1v1h-1zM127 583h1v1h-1zM127 567h1v1h-1zM127 552h1v1h-1zM127 537h1v1h-1zM127 522h1v1h-1zM127 507h1v1h-1zM127 492h1v1h-1zM127 477h1v1h-1zM127 461h1v1h-1zM127 446h1v1h-1zM127 431h1v1h-1zM127 416h1v1h-1zM127 401h1v1h-1zM127 386h1v1h-1zM127 371h1v1h-1zM127 356h1v1h-1zM127 340h1v1h-1zM127 325h1v1h-1zM127 310h1v1h-1zM127 295h1v1h-1zM127 280h1v1h-1zM127 265h1v1h-1zM127 250h1v1h-1zM127 235h1v1h-1zM127 219h1v1h-1zM127 204h1v1h-1zM127 189h1v1h-1zM127 174h1v1h-1zM127 159h1v1h-1zM127 144h1v1h-1zM127 129h1v1h-1zM127 114h1v1h-1zM142 583h1v1h-1zM142 567h1v1h-1zM142 552h1v1h-1zM142 537h1v1h-1zM142 522h1v1h-1zM142 507h1v1h-1zM142 492h1v1h-1zM142 477h1v1h-1zM142 461h1v1h-1zM142 446h1v1h-1zM142 431h1v1h-1zM142 416h1v1h-1zM142 401h1v1h-1zM142 386h1v1h-1zM142 371h1v1h-1zM142 356h1v1h-1zM142 340h1v1h-1zM142 325h1v1h-1zM142 310h1v1h-1zM142 295h1v1h-1zM142 280h1v1h-1zM142 265h1v1h-1zM142 250h1v1h-1zM142 235h1v1h-1zM142 219h1v1h-1zM142 204h1v1h-1zM142 189h1v1h-1zM142 174h1v1h-1zM142 159h1v1h-1zM142 144h1v1h-1zM142 129h1v1h-1zM142 114h1v1h-1zM157 583h1v1h-1zM157 567h1v1h-1zM157 552h1v1h-1zM157 537h1v1h-1zM157 522h1v1h-1zM157 507h1v1h-1zM157 492h1v1h-1zM157 477h1v1h-1zM157 461h1v1h-1zM157 446h1v1h-1zM157 431h1v1h-1zM157 416h1v1h-1zM157 401h1v1h-1zM157 386h1v1h-1zM157 371h1v1h-1zM157 356h1v1h-1zM157 340h1v1h-1zM157 325h1v1h-1zM157 310h1v1h-1zM157 295h1v1h-1zM157 280h1v1h-1zM157 265h1v1h-1zM157 250h1v1h-1zM157 235h1v1h-1zM157 219h1v1h-1zM157 204h1v1h-1zM157 189h1v1h-1zM157 174h1v1h-1zM157 159h1v1h-1zM157 144h1v1h-1zM157 129h1v1h-1zM157 114h1v1h-1zM172 583h1v1h-1zM172 567h1v1h-1zM172 552h1v1h-1zM172 537h1v1h-1zM172 522h1v1h-1zM172 507h1v1h-1zM172 492h1v1h-1zM172 477h1v1h-1zM172 461h1v1h-1zM172 446h1v1h-1zM172 431h1v1h-1zM172 416h1v1h-1zM172 401h1v1h-1zM172 386h1v1h-1zM172 371h1v1h-1zM172 356h1v1h-1zM172 340h1v1h-1zM172 325h1v1h-1zM172 310h1v1h-1zM172 295h1v1h-1zM172 280h1v1h-1zM172 265h1v1h-1zM172 250h1v1h-1zM172 235h1v1h-1zM172 219h1v1h-1zM172 204h1v1h-1zM172 189h1v1h-1zM172 174h1v1h-1zM172 159h1v1h-1zM172 144h1v1h-1zM172 129h1v1h-1zM172 114h1v1h-1zM187 583h1v1h-1zM187 567h1v1h-1zM187 552h1v1h-1zM187 537h1v1h-1zM187 522h1v1h-1zM187 507h1v1h-1zM187 492h1v1h-1zM187 477h1v1h-1zM187 461h1v1h-1zM187 446h1v1h-1zM187 431h1v1h-1zM187 416h1v1h-1zM187 401h1v1h-1zM187 386h1v1h-1zM187 371h1v1h-1zM187 356h1v1h-1zM187 340h1v1h-1zM187 325h1v1h-1zM187 310h1v1h-1zM187 295h1v1h-1zM187 280h1v1h-1zM187 265h1v1h-1zM187 250h1v1h-1zM187 235h1v1h-1zM187 219h1v1h-1zM187 204h1v1h-1zM187 189h1v1h-1zM187 174h1v1h-1zM187 159h1v1h-1zM187 144h1v1h-1zM187 129h1v1h-1zM187 114h1v1h-1zM203 583h1v1h-1zM203 567h1v1h-1zM203 552h1v1h-1zM203 537h1v1h-1zM203 522h1v1h-1zM203 507h1v1h-1zM203 492h1v1h-1zM203 477h1v1h-1zM203 461h1v1h-1zM203 446h1v1h-1zM203 431h1v1h-1zM203 416h1v1h-1zM203 401h1v1h-1zM203 386h1v1h-1zM203 371h1v1h-1zM203 356h1v1h-1zM203 340h1v1h-1zM203 325h1v1h-1zM203 310h1v1h-1zM203 295h1v1h-1zM203 280h1v1h-1zM203 265h1v1h-1zM203 250h1v1h-1zM203 235h1v1h-1zM203 219h1v1h-1zM203 204h1v1h-1zM203 189h1v1h-1zM203 174h1v1h-1zM203 159h1v1h-1zM203 144h1v1h-1zM203 129h1v1h-1zM203 114h1v1h-1zM218 583h1v1h-1zM218 567h1v1h-1zM218 552h1v1h-1zM218 537h1v1h-1zM218 522h1v1h-1zM218 507h1v1h-1zM218 492h1v1h-1zM218 477h1v1h-1zM218 461h1v1h-1zM218 446h1v1h-1zM218 431h1v1h-1zM218 416h1v1h-1zM218 401h1v1h-1zM218 386h1v1h-1zM218 371h1v1h-1zM218 356h1v1h-1zM218 340h1v1h-1zM218 325h1v1h-1zM218 310h1v1h-1zM218 295h1v1h-1zM218 280h1v1h-1zM218 265h1v1h-1zM218 250h1v1h-1zM218 235h1v1h-1zM218 219h1v1h-1zM218 204h1v1h-1zM218 189h1v1h-1zM218 174h1v1h-1zM218 159h1v1h-1zM218 144h1v1h-1zM218 129h1v1h-1zM218 114h1v1h-1zM233 583h1v1h-1zM233 567h1v1h-1zM233 552h1v1h-1zM233 537h1v1h-1zM233 522h1v1h-1zM233 507h1v1h-1zM233 492h1v1h-1zM233 477h1v1h-1zM233 461h1v1h-1zM233 446h1v1h-1zM233 431h1v1h-1zM233 416h1v1h-1zM233 401h1v1h-1zM233 386h1v1h-1zM233 371h1v1h-1zM233 356h1v1h-1zM233 340h1v1h-1zM233 325h1v1h-1zM233 310h1v1h-1zM233 295h1v1h-1zM233 280h1v1h-1zM233 265h1v1h-1zM233 250h1v1h-1zM233 235h1v1h-1zM233 219h1v1h-1zM233 204h1v1h-1zM233 189h1v1h-1zM233 174h1v1h-1zM233 159h1v1h-1zM233 144h1v1h-1zM233 129h1v1h-1zM233 114h1v1h-1zM248 583h1v1h-1zM248 567h1v1h-1zM248 552h1v1h-1zM248 537h1v1h-1zM248 522h1v1h-1zM248 507h1v1h-1zM248 492h1v1h-1zM248 477h1v1h-1zM248 461h1v1h-1zM248 446h1v1h-1zM248 431h1v1h-1zM248 416h1v1h-1zM248 401h1v1h-1zM248 386h1v1h-1zM248 371h1v1h-1zM248 356h1v1h-1zM248 340h1v1h-1zM248 325h1v1h-1zM248 310h1v1h-1zM248 295h1v1h-1zM248 280h1v1h-1zM248 265h1v1h-1zM248 250h1v1h-1zM248 235h1v1h-1zM248 219h1v1h-1zM248 204h1v1h-1zM248 189h1v1h-1zM248 174h1v1h-1zM248 159h1v1h-1zM248 144h1v1h-1zM248 129h1v1h-1zM248 114h1v1h-1zM263 583h1v1h-1zM263 567h1v1h-1zM263 552h1v1h-1zM263 537h1v1h-1zM263 522h1v1h-1zM263 507h1v1h-1zM263 492h1v1h-1zM263 477h1v1h-1zM263 461h1v1h-1zM263 446h1v1h-1zM263 431h1v1h-1zM263 416h1v1h-1zM263 401h1v1h-1zM263 386h1v1h-1zM263 371h1v1h-1zM263 356h1v1h-1zM263 340h1v1h-1zM263 325h1v1h-1zM263 310h1v1h-1zM263 295h1v1h-1zM263 280h1v1h-1zM263 265h1v1h-1zM263 250h1v1h-1zM263 235h1v1h-1zM263 219h1v1h-1zM263 204h1v1h-1zM263 189h1v1h-1zM263 174h1v1h-1zM263 159h1v1h-1zM263 144h1v1h-1zM263 129h1v1h-1zM263 114h1v1h-1zM278 583h1v1h-1zM278 567h1v1h-1zM278 552h1v1h-1zM278 537h1v1h-1zM278 522h1v1h-1zM278 507h1v1h-1zM278 492h1v1h-1zM278 477h1v1h-1zM278 461h1v1h-1zM278 446h1v1h-1zM278 431h1v1h-1zM278 416h1v1h-1zM278 401h1v1h-1zM278 386h1v1h-1zM278 371h1v1h-1zM278 356h1v1h-1zM278 340h1v1h-1zM278 325h1v1h-1zM278 310h1v1h-1zM278 295h1v1h-1zM278 280h1v1h-1zM278 265h1v1h-1zM278 250h1v1h-1zM278 235h1v1h-1zM278 219h1v1h-1zM278 204h1v1h-1zM278 189h1v1h-1zM278 174h1v1h-1zM278 159h1v1h-1zM278 144h1v1h-1zM278 129h1v1h-1zM278 114h1v1h-1zM293 583h1v1h-1zM293 567h1v1h-1zM293 552h1v1h-1zM293 537h1v1h-1zM293 522h1v1h-1zM293 507h1v1h-1zM293 492h1v1h-1zM293 477h1v1h-1zM293 461h1v1h-1zM293 446h1v1h-1zM293 431h1v1h-1zM293 416h1v1h-1zM293 401h1v1h-1zM293 386h1v1h-1zM293 371h1v1h-1zM293 356h1v1h-1zM293 340h1v1h-1zM293 325h1v1h-1zM293 310h1v1h-1zM293 295h1v1h-1zM293 280h1v1h-1zM293 265h1v1h-1zM293 250h1v1h-1zM293 235h1v1h-1zM293 219h1v1h-1zM293 204h1v1h-1zM293 189h1v1h-1zM293 174h1v1h-1zM293 159h1v1h-1zM293 144h1v1h-1zM293 129h1v1h-1zM293 114h1v1h-1zM308 583h1v1h-1zM308 567h1v1h-1zM308 552h1v1h-1zM308 537h1v1h-1zM308 522h1v1h-1zM308 507h1v1h-1zM308 492h1v1h-1zM308 477h1v1h-1zM308 461h1v1h-1zM308 446h1v1h-1zM308 431h1v1h-1zM308 416h1v1h-1zM308 401h1v1h-1zM308 386h1v1h-1zM308 371h1v1h-1zM308 356h1v1h-1zM308 340h1v1h-1zM308 325h1v1h-1zM308 310h1v1h-1zM308 295h1v1h-1zM308 280h1v1h-1zM308 265h1v1h-1zM308 250h1v1h-1zM308 235h1v1h-1zM308 219h1v1h-1zM308 204h1v1h-1zM308 189h1v1h-1zM308 174h1v1h-1zM308 159h1v1h-1zM308 144h1v1h-1zM308 129h1v1h-1zM308 114h1v1h-1zM324 583h1v1h-1zM324 567h1v1h-1zM324 552h1v1h-1zM324 537h1v1h-1zM324 522h1v1h-1zM324 507h1v1h-1zM324 492h1v1h-1zM324 477h1v1h-1zM324 461h1v1h-1zM324 446h1v1h-1zM324 431h1v1h-1zM324 416h1v1h-1zM324 401h1v1h-1zM324 386h1v1h-1zM324 371h1v1h-1zM324 356h1v1h-1zM324 340h1v1h-1zM324 325h1v1h-1zM324 310h1v1h-1zM324 295h1v1h-1zM324 280h1v1h-1zM324 265h1v1h-1zM324 250h1v1h-1zM324 235h1v1h-1zM324 219h1v1h-1zM324 204h1v1h-1zM324 189h1v1h-1zM324 174h1v1h-1zM324 159h1v1h-1zM324 144h1v1h-1zM324 129h1v1h-1zM324 114h1v1h-1zM339 583h1v1h-1zM339 567h1v1h-1zM339 552h1v1h-1zM339 537h1v1h-1zM339 522h1v1h-1zM339 507h1v1h-1zM339 492h1v1h-1zM339 477h1v1h-1zM339 461h1v1h-1zM339 446h1v1h-1zM339 431h1v1h-1zM339 416h1v1h-1zM339 401h1v1h-1zM339 386h1v1h-1zM339 371h1v1h-1zM339 356h1v1h-1zM339 340h1v1h-1zM339 325h1v1h-1zM339 310h1v1h-1zM339 295h1v1h-1zM339 280h1v1h-1zM339 265h1v1h-1zM339 250h1v1h-1zM339 235h1v1h-1zM339 219h1v1h-1zM339 204h1v1h-1zM339 189h1v1h-1zM339 174h1v1h-1zM339 159h1v1h-1zM339 144h1v1h-1zM339 129h1v1h-1zM339 114h1v1h-1zM354 583h1v1h-1zM354 567h1v1h-1zM354 552h1v1h-1zM354 537h1v1h-1zM354 522h1v1h-1zM354 507h1v1h-1zM354 492h1v1h-1zM354 477h1v1h-1zM354 461h1v1h-1zM354 446h1v1h-1zM354 431h1v1h-1zM354 416h1v1h-1zM354 401h1v1h-1zM354 386h1v1h-1zM354 371h1v1h-1zM354 356h1v1h-1zM354 340h1v1h-1zM354 325h1v1h-1zM354 310h1v1h-1zM354 295h1v1h-1zM354 280h1v1h-1zM354 265h1v1h-1zM354 250h1v1h-1zM354 235h1v1h-1zM354 219h1v1h-1zM354 204h1v1h-1zM354 189h1v1h-1zM354 174h1v1h-1zM354 159h1v1h-1zM354 144h1v1h-1zM354 129h1v1h-1zM354 114h1v1h-1zM369 583h1v1h-1zM369 567h1v1h-1zM369 552h1v1h-1zM369 537h1v1h-1zM369 522h1v1h-1zM369 507h1v1h-1zM369 492h1v1h-1zM369 477h1v1h-1zM369 461h1v1h-1zM369 446h1v1h-1zM369 431h1v1h-1zM369 416h1v1h-1zM369 401h1v1h-1zM369 386h1v1h-1zM369 371h1v1h-1zM369 356h1v1h-1zM369 340h1v1h-1zM369 325h1v1h-1zM369 310h1v1h-1zM369 295h1v1h-1zM369 280h1v1h-1zM369 265h1v1h-1zM369 250h1v1h-1zM369 235h1v1h-1zM369 219h1v1h-1zM369 204h1v1h-1zM369 189h1v1h-1zM369 174h1v1h-1zM369 159h1v1h-1zM369 144h1v1h-1zM369 129h1v1h-1zM369 114h1v1h-1zM384 583h1v1h-1zM384 567h1v1h-1zM384 552h1v1h-1zM384 537h1v1h-1zM384 522h1v1h-1zM384 507h1v1h-1zM384 492h1v1h-1zM384 477h1v1h-1zM384 461h1v1h-1zM384 446h1v1h-1zM384 431h1v1h-1zM384 416h1v1h-1zM384 401h1v1h-1zM384 386h1v1h-1zM384 371h1v1h-1zM384 356h1v1h-1zM384 340h1v1h-1zM384 325h1v1h-1zM384 310h1v1h-1zM384 295h1v1h-1zM384 280h1v1h-1zM384 265h1v1h-1zM384 250h1v1h-1zM384 235h1v1h-1zM384 219h1v1h-1zM384 204h1v1h-1zM384 189h1v1h-1zM384 174h1v1h-1zM384 159h1v1h-1zM384 144h1v1h-1zM384 129h1v1h-1zM384 114h1v1h-1zM399 583h1v1h-1zM399 567h1v1h-1zM399 552h1v1h-1zM399 537h1v1h-1zM399 522h1v1h-1zM399 507h1v1h-1zM399 492h1v1h-1zM399 477h1v1h-1zM399 461h1v1h-1zM399 446h1v1h-1zM399 431h1v1h-1zM399 416h1v1h-1zM399 401h1v1h-1zM399 386h1v1h-1zM399 371h1v1h-1zM399 356h1v1h-1zM399 340h1v1h-1zM399 325h1v1h-1zM399 310h1v1h-1zM399 295h1v1h-1zM399 280h1v1h-1zM399 265h1v1h-1zM399 250h1v1h-1zM399 235h1v1h-1zM399 219h1v1h-1zM399 204h1v1h-1zM399 189h1v1h-1zM399 174h1v1h-1zM399 159h1v1h-1zM399 144h1v1h-1zM399 129h1v1h-1zM399 114h1v1h-1zM414 583h1v1h-1zM414 567h1v1h-1zM414 552h1v1h-1zM414 537h1v1h-1zM414 522h1v1h-1zM414 507h1v1h-1zM414 492h1v1h-1zM414 477h1v1h-1zM414 461h1v1h-1zM414 446h1v1h-1zM414 431h1v1h-1zM414 416h1v1h-1zM414 401h1v1h-1zM414 386h1v1h-1zM414 371h1v1h-1zM414 356h1v1h-1zM414 340h1v1h-1zM414 325h1v1h-1zM414 310h1v1h-1zM414 295h1v1h-1zM414 280h1v1h-1zM414 265h1v1h-1zM414 250h1v1h-1zM414 235h1v1h-1zM414 219h1v1h-1zM414 204h1v1h-1zM414 189h1v1h-1zM414 174h1v1h-1zM414 159h1v1h-1zM414 144h1v1h-1zM414 129h1v1h-1zM414 114h1v1h-1zM429 583h1v1h-1zM429 567h1v1h-1zM429 552h1v1h-1zM429 537h1v1h-1zM429 522h1v1h-1zM429 507h1v1h-1zM429 492h1v1h-1zM429 477h1v1h-1zM429 461h1v1h-1zM429 446h1v1h-1zM429 431h1v1h-1zM429 416h1v1h-1zM429 401h1v1h-1zM429 386h1v1h-1zM429 371h1v1h-1zM429 356h1v1h-1zM429 340h1v1h-1zM429 325h1v1h-1zM429 310h1v1h-1zM429 295h1v1h-1zM429 280h1v1h-1zM429 265h1v1h-1zM429 250h1v1h-1zM429 235h1v1h-1zM429 219h1v1h-1zM429 204h1v1h-1zM429 189h1v1h-1zM429 174h1v1h-1zM429 159h1v1h-1zM429 144h1v1h-1zM429 129h1v1h-1zM429 114h1v1h-1zM445 583h1v1h-1zM445 567h1v1h-1zM445 552h1v1h-1zM445 537h1v1h-1zM445 522h1v1h-1zM445 507h1v1h-1zM445 492h1v1h-1zM445 477h1v1h-1zM445 461h1v1h-1zM445 446h1v1h-1zM445 431h1v1h-1zM445 416h1v1h-1zM445 401h1v1h-1zM445 386h1v1h-1zM445 371h1v1h-1zM445 356h1v1h-1zM445 340h1v1h-1zM445 325h1v1h-1zM445 310h1v1h-1zM445 295h1v1h-1zM445 280h1v1h-1zM445 265h1v1h-1zM445 250h1v1h-1zM445 235h1v1h-1zM445 219h1v1h-1zM445 204h1v1h-1zM445 189h1v1h-1zM445 174h1v1h-1zM445 159h1v1h-1zM445 144h1v1h-1zM445 129h1v1h-1zM445 114h1v1h-1zM460 583h1v1h-1zM460 567h1v1h-1zM460 552h1v1h-1zM460 537h1v1h-1zM460 522h1v1h-1zM460 507h1v1h-1zM460 492h1v1h-1zM460 477h1v1h-1zM460 461h1v1h-1zM460 446h1v1h-1zM460 431h1v1h-1zM460 416h1v1h-1zM460 401h1v1h-1zM460 386h1v1h-1zM460 371h1v1h-1zM460 356h1v1h-1zM460 340h1v1h-1zM460 325h1v1h-1zM460 310h1v1h-1zM460 295h1v1h-1zM460 280h1v1h-1zM460 265h1v1h-1zM460 250h1v1h-1zM460 235h1v1h-1zM460 219h1v1h-1zM460 204h1v1h-1zM460 189h1v1h-1zM460 174h1v1h-1zM460 159h1v1h-1zM460 144h1v1h-1zM460 129h1v1h-1zM460 114h1v1h-1zM475 583h1v1h-1zM475 567h1v1h-1zM475 552h1v1h-1zM475 537h1v1h-1zM475 522h1v1h-1zM475 507h1v1h-1zM475 492h1v1h-1zM475 477h1v1h-1zM475 461h1v1h-1zM475 446h1v1h-1zM475 431h1v1h-1zM475 416h1v1h-1zM475 401h1v1h-1zM475 386h1v1h-1zM475 371h1v1h-1zM475 356h1v1h-1zM475 340h1v1h-1zM475 325h1v1h-1zM475 310h1v1h-1zM475 295h1v1h-1zM475 280h1v1h-1zM475 265h1v1h-1zM475 250h1v1h-1zM475 235h1v1h-1zM475 219h1v1h-1zM475 204h1v1h-1zM475 189h1v1h-1zM475 174h1v1h-1zM475 159h1v1h-1zM475 144h1v1h-1zM475 129h1v1h-1zM475 114h1v1h-1zM490 583h1v1h-1zM490 567h1v1h-1zM490 552h1v1h-1zM490 537h1v1h-1zM490 522h1v1h-1zM490 507h1v1h-1zM490 492h1v1h-1zM490 477h1v1h-1zM490 461h1v1h-1zM490 446h1v1h-1zM490 431h1v1h-1zM490 416h1v1h-1zM490 401h1v1h-1zM490 386h1v1h-1zM490 371h1v1h-1zM490 356h1v1h-1zM490 340h1v1h-1zM490 325h1v1h-1zM490 310h1v1h-1zM490 295h1v1h-1zM490 280h1v1h-1zM490 265h1v1h-1zM490 250h1v1h-1zM490 235h1v1h-1zM490 219h1v1h-1zM490 204h1v1h-1zM490 189h1v1h-1zM490 174h1v1h-1zM490 159h1v1h-1zM490 144h1v1h-1zM490 129h1v1h-1zM490 114h1v1h-1zM505 583h1v1h-1zM505 567h1v1h-1zM505 552h1v1h-1zM505 537h1v1h-1zM505 522h1v1h-1zM505 507h1v1h-1zM505 492h1v1h-1zM505 477h1v1h-1zM505 461h1v1h-1zM505 446h1v1h-1zM505 431h1v1h-1zM505 416h1v1h-1zM505 401h1v1h-1zM505 386h1v1h-1zM505 371h1v1h-1zM505 356h1v1h-1zM505 340h1v1h-1zM505 325h1v1h-1zM505 310h1v1h-1zM505 295h1v1h-1zM505 280h1v1h-1zM505 265h1v1h-1zM505 250h1v1h-1zM505 235h1v1h-1zM505 219h1v1h-1zM505 204h1v1h-1zM505 189h1v1h-1zM505 174h1v1h-1zM505 159h1v1h-1zM505 144h1v1h-1zM505 129h1v1h-1zM505 114h1v1h-1zM520 583h1v1h-1zM520 567h1v1h-1zM520 552h1v1h-1zM520 537h1v1h-1zM520 522h1v1h-1zM520 507h1v1h-1zM520 492h1v1h-1zM520 477h1v1h-1zM520 461h1v1h-1zM520 446h1v1h-1zM520 431h1v1h-1zM520 416h1v1h-1zM520 401h1v1h-1zM520 386h1v1h-1zM520 371h1v1h-1zM520 356h1v1h-1zM520 340h1v1h-1zM520 325h1v1h-1zM520 310h1v1h-1zM520 295h1v1h-1zM520 280h1v1h-1zM520 265h1v1h-1zM520 250h1v1h-1zM520 235h1v1h-1zM520 219h1v1h-1zM520 204h1v1h-1zM520 189h1v1h-1zM520 174h1v1h-1zM520 159h1v1h-1zM520 144h1v1h-1zM520 129h1v1h-1zM520 114h1v1h-1zM535 583h1v1h-1zM535 567h1v1h-1zM535 552h1v1h-1zM535 537h1v1h-1zM535 522h1v1h-1zM535 507h1v1h-1zM535 492h1v1h-1zM535 477h1v1h-1zM535 461h1v1h-1zM535 446h1v1h-1zM535 431h1v1h-1zM535 416h1v1h-1zM535 401h1v1h-1zM535 386h1v1h-1zM535 371h1v1h-1zM535 356h1v1h-1zM535 340h1v1h-1zM535 325h1v1h-1zM535 310h1v1h-1zM535 295h1v1h-1zM535 280h1v1h-1zM535 265h1v1h-1zM535 250h1v1h-1zM535 235h1v1h-1zM535 219h1v1h-1zM535 204h1v1h-1zM535 189h1v1h-1zM535 174h1v1h-1zM535 159h1v1h-1zM535 144h1v1h-1zM535 129h1v1h-1zM535 114h1v1h-1zM550 583h1v1h-1zM550 567h1v1h-1zM550 552h1v1h-1zM550 537h1v1h-1zM550 522h1v1h-1zM550 507h1v1h-1zM550 492h1v1h-1zM550 477h1v1h-1zM550 461h1v1h-1zM550 446h1v1h-1zM550 431h1v1h-1zM550 416h1v1h-1zM550 401h1v1h-1zM550 386h1v1h-1zM550 371h1v1h-1zM550 356h1v1h-1zM550 340h1v1h-1zM550 325h1v1h-1zM550 310h1v1h-1zM550 295h1v1h-1zM550 280h1v1h-1zM550 265h1v1h-1zM550 250h1v1h-1zM550 235h1v1h-1zM550 219h1v1h-1zM550 204h1v1h-1zM550 189h1v1h-1zM550 174h1v1h-1zM550 159h1v1h-1zM550 144h1v1h-1zM550 129h1v1h-1zM550 114h1v1h-1zM566 583h1v1h-1zM566 567h1v1h-1zM566 552h1v1h-1zM566 537h1v1h-1zM566 522h1v1h-1zM566 507h1v1h-1zM566 492h1v1h-1zM566 477h1v1h-1zM566 461h1v1h-1zM566 446h1v1h-1zM566 431h1v1h-1zM566 416h1v1h-1zM566 401h1v1h-1zM566 386h1v1h-1zM566 371h1v1h-1zM566 356h1v1h-1zM566 340h1v1h-1zM566 325h1v1h-1zM566 310h1v1h-1zM566 295h1v1h-1zM566 280h1v1h-1zM566 265h1v1h-1zM566 250h1v1h-1zM566 235h1v1h-1zM566 219h1v1h-1zM566 204h1v1h-1zM566 189h1v1h-1zM566 174h1v1h-1zM566 159h1v1h-1zM566 144h1v1h-1zM566 129h1v1h-1zM566 114h1v1h-1zM581 583h1v1h-1zM581 567h1v1h-1zM581 552h1v1h-1zM581 537h1v1h-1zM581 522h1v1h-1zM581 507h1v1h-1zM581 492h1v1h-1zM581 477h1v1h-1zM581 461h1v1h-1zM581 446h1v1h-1zM581 431h1v1h-1zM581 416h1v1h-1zM581 401h1v1h-1zM581 386h1v1h-1zM581 371h1v1h-1zM581 356h1v1h-1zM581 340h1v1h-1zM581 325h1v1h-1zM581 310h1v1h-1zM581 295h1v1h-1zM581 280h1v1h-1zM581 265h1v1h-1zM581 250h1v1h-1zM581 235h1v1h-1zM581 219h1v1h-1zM581 204h1v1h-1zM581 189h1v1h-1zM581 174h1v1h-1zM581 159h1v1h-1zM581 144h1v1h-1zM581 129h1v1h-1zM581 114h1v1h-1zM596 583h1v1h-1zM596 567h1v1h-1zM596 552h1v1h-1zM596 537h1v1h-1zM596 522h1v1h-1zM596 507h1v1h-1zM596 492h1v1h-1zM596 477h1v1h-1zM596 461h1v1h-1zM596 446h1v1h-1zM596 431h1v1h-1zM596 416h1v1h-1zM596 401h1v1h-1zM596 386h1v1h-1zM596 371h1v1h-1zM596 356h1v1h-1zM596 340h1v1h-1zM596 325h1v1h-1zM596 310h1v1h-1zM596 295h1v1h-1zM596 280h1v1h-1zM596 265h1v1h-1zM596 250h1v1h-1zM596 235h1v1h-1zM596 219h1v1h-1zM596 204h1v1h-1zM596 189h1v1h-1zM596 174h1v1h-1zM596 159h1v1h-1zM596 144h1v1h-1zM596 129h1v1h-1zM596 114h1v1h-1zM611 583h1v1h-1zM611 567h1v1h-1zM611 552h1v1h-1zM611 537h1v1h-1zM611 522h1v1h-1zM611 507h1v1h-1zM611 492h1v1h-1zM611 477h1v1h-1zM611 461h1v1h-1zM611 446h1v1h-1zM611 431h1v1h-1zM611 416h1v1h-1zM611 401h1v1h-1zM611 386h1v1h-1zM611 371h1v1h-1zM611 356h1v1h-1zM611 340h1v1h-1zM611 325h1v1h-1zM611 310h1v1h-1zM611 295h1v1h-1zM611 280h1v1h-1zM611 265h1v1h-1zM611 250h1v1h-1zM611 235h1v1h-1zM611 219h1v1h-1zM611 204h1v1h-1zM611 189h1v1h-1zM611 174h1v1h-1zM611 159h1v1h-1zM611 144h1v1h-1zM611 129h1v1h-1zM611 114h1v1h-1zM626 583h1v1h-1zM626 567h1v1h-1zM626 552h1v1h-1zM626 537h1v1h-1zM626 522h1v1h-1zM626 507h1v1h-1zM626 492h1v1h-1zM626 477h1v1h-1zM626 461h1v1h-1zM626 446h1v1h-1zM626 431h1v1h-1zM626 416h1v1h-1zM626 401h1v1h-1zM626 386h1v1h-1zM626 371h1v1h-1zM626 356h1v1h-1zM626 340h1v1h-1zM626 325h1v1h-1zM626 310h1v1h-1zM626 295h1v1h-1zM626 280h1v1h-1zM626 265h1v1h-1zM626 250h1v1h-1zM626 235h1v1h-1zM626 219h1v1h-1zM626 204h1v1h-1zM626 189h1v1h-1zM626 174h1v1h-1zM626 159h1v1h-1zM626 144h1v1h-1zM626 129h1v1h-1zM626 114h1v1h-1zM641 583h1v1h-1zM641 567h1v1h-1zM641 552h1v1h-1zM641 537h1v1h-1zM641 522h1v1h-1zM641 507h1v1h-1zM641 492h1v1h-1zM641 477h1v1h-1zM641 461h1v1h-1zM641 446h1v1h-1zM641 431h1v1h-1zM641 416h1v1h-1zM641 401h1v1h-1zM641 386h1v1h-1zM641 371h1v1h-1zM641 356h1v1h-1zM641 340h1v1h-1zM641 325h1v1h-1zM641 310h1v1h-1zM641 295h1v1h-1zM641 280h1v1h-1zM641 265h1v1h-1zM641 250h1v1h-1zM641 235h1v1h-1zM641 219h1v1h-1zM641 204h1v1h-1zM641 189h1v1h-1zM641 174h1v1h-1zM641 159h1v1h-1zM641 144h1v1h-1zM641 129h1v1h-1zM641 114h1v1h-1zM656 583h1v1h-1zM656 567h1v1h-1zM656 552h1v1h-1zM656 537h1v1h-1zM656 522h1v1h-1zM656 507h1v1h-1zM656 492h1v1h-1zM656 477h1v1h-1zM656 461h1v1h-1zM656 446h1v1h-1zM656 431h1v1h-1zM656 416h1v1h-1zM656 401h1v1h-1zM656 386h1v1h-1zM656 371h1v1h-1zM656 356h1v1h-1zM656 340h1v1h-1zM656 325h1v1h-1zM656 310h1v1h-1zM656 295h1v1h-1zM656 280h1v1h-1zM656 265h1v1h-1zM656 250h1v1h-1zM656 235h1v1h-1zM656 219h1v1h-1zM656 204h1v1h-1zM656 189h1v1h-1zM656 174h1v1h-1zM656 159h1v1h-1zM656 144h1v1h-1zM656 129h1v1h-1zM656 114h1v1h-1zM671 583h1v1h-1zM671 567h1v1h-1zM671 552h1v1h-1zM671 537h1v1h-1zM671 522h1v1h-1zM671 507h1v1h-1zM671 492h1v1h-1zM671 477h1v1h-1zM671 461h1v1h-1zM671 446h1v1h-1zM671 431h1v1h-1zM671 416h1v1h-1zM671 401h1v1h-1zM671 386h1v1h-1zM671 371h1v1h-1zM671 356h1v1h-1zM671 340h1v1h-1zM671 325h1v1h-1zM671 310h1v1h-1zM671 295h1v1h-1zM671 280h1v1h-1zM671 265h1v1h-1zM671 250h1v1h-1zM671 235h1v1h-1zM671 219h1v1h-1zM671 204h1v1h-1zM671 189h1v1h-1zM671 174h1v1h-1zM671 159h1v1h-1zM671 144h1v1h-1zM671 129h1v1h-1zM671 114h1v1h-1zM687 583h1v1h-1zM687 567h1v1h-1zM687 552h1v1h-1zM687 537h1v1h-1zM687 522h1v1h-1zM687 507h1v1h-1zM687 492h1v1h-1zM687 477h1v1h-1zM687 461h1v1h-1zM687 446h1v1h-1zM687 431h1v1h-1zM687 416h1v1h-1zM687 401h1v1h-1zM687 386h1v1h-1zM687 371h1v1h-1zM687 356h1v1h-1zM687 340h1v1h-1zM687 325h1v1h-1zM687 310h1v1h-1zM687 295h1v1h-1zM687 280h1v1h-1zM687 265h1v1h-1zM687 250h1v1h-1zM687 235h1v1h-1zM687 219h1v1h-1zM687 204h1v1h-1zM687 189h1v1h-1zM687 174h1v1h-1zM687 159h1v1h-1zM687 144h1v1h-1zM687 129h1v1h-1zM687 114h1v1h-1zM702 583h1v1h-1zM702 567h1v1h-1zM702 552h1v1h-1zM702 537h1v1h-1zM702 522h1v1h-1zM702 507h1v1h-1zM702 492h1v1h-1zM702 477h1v1h-1zM702 461h1v1h-1zM702 446h1v1h-1zM702 431h1v1h-1zM702 416h1v1h-1zM702 401h1v1h-1zM702 386h1v1h-1zM702 371h1v1h-1zM702 356h1v1h-1zM702 340h1v1h-1zM702 325h1v1h-1zM702 310h1v1h-1zM702 295h1v1h-1zM702 280h1v1h-1zM702 265h1v1h-1zM702 250h1v1h-1zM702 235h1v1h-1zM702 219h1v1h-1zM702 204h1v1h-1zM702 189h1v1h-1zM702 174h1v1h-1zM702 159h1v1h-1zM702 144h1v1h-1zM702 129h1v1h-1zM702 114h1v1h-1zM717 583h1v1h-1zM717 567h1v1h-1zM717 552h1v1h-1zM717 537h1v1h-1zM717 522h1v1h-1zM717 507h1v1h-1zM717 492h1v1h-1zM717 477h1v1h-1zM717 461h1v1h-1zM717 446h1v1h-1zM717 431h1v1h-1zM717 416h1v1h-1zM717 401h1v1h-1zM717 386h1v1h-1zM717 371h1v1h-1zM717 356h1v1h-1zM717 340h1v1h-1zM717 325h1v1h-1zM717 310h1v1h-1zM717 295h1v1h-1zM717 280h1v1h-1zM717 265h1v1h-1zM717 250h1v1h-1zM717 235h1v1h-1zM717 219h1v1h-1zM717 204h1v1h-1zM717 189h1v1h-1zM717 174h1v1h-1zM717 159h1v1h-1zM717 144h1v1h-1zM717 129h1v1h-1zM717 114h1v1h-1zM732 583h1v1h-1zM732 567h1v1h-1zM732 552h1v1h-1zM732 537h1v1h-1zM732 522h1v1h-1zM732 507h1v1h-1zM732 492h1v1h-1zM732 477h1v1h-1zM732 461h1v1h-1zM732 446h1v1h-1zM732 431h1v1h-1zM732 416h1v1h-1zM732 401h1v1h-1zM732 386h1v1h-1zM732 371h1v1h-1zM732 356h1v1h-1zM732 340h1v1h-1zM732 325h1v1h-1zM732 310h1v1h-1zM732 295h1v1h-1zM732 280h1v1h-1zM732 265h1v1h-1zM732 250h1v1h-1zM732 235h1v1h-1zM732 219h1v1h-1zM732 204h1v1h-1zM732 189h1v1h-1zM732 174h1v1h-1zM732 159h1v1h-1zM732 144h1v1h-1zM732 129h1v1h-1zM732 114h1v1h-1zM747 583h1v1h-1zM747 567h1v1h-1zM747 552h1v1h-1zM747 537h1v1h-1zM747 522h1v1h-1zM747 507h1v1h-1zM747 492h1v1h-1zM747 477h1v1h-1zM747 461h1v1h-1zM747 446h1v1h-1zM747 431h1v1h-1zM747 416h1v1h-1zM747 401h1v1h-1zM747 386h1v1h-1zM747 371h1v1h-1zM747 356h1v1h-1zM747 340h1v1h-1zM747 325h1v1h-1zM747 310h1v1h-1zM747 295h1v1h-1zM747 280h1v1h-1zM747 265h1v1h-1zM747 250h1v1h-1zM747 235h1v1h-1zM747 219h1v1h-1zM747 204h1v1h-1zM747 189h1v1h-1zM747 174h1v1h-1zM747 159h1v1h-1zM747 144h1v1h-1zM747 129h1v1h-1zM747 114h1v1h-1zM762 583h1v1h-1zM762 567h1v1h-1zM762 552h1v1h-1zM762 537h1v1h-1zM762 522h1v1h-1zM762 507h1v1h-1zM762 492h1v1h-1zM762 477h1v1h-1zM762 461h1v1h-1zM762 446h1v1h-1zM762 431h1v1h-1zM762 416h1v1h-1zM762 401h1v1h-1zM762 386h1v1h-1zM762 371h1v1h-1zM762 356h1v1h-1zM762 340h1v1h-1zM762 325h1v1h-1zM762 310h1v1h-1zM762 295h1v1h-1zM762 280h1v1h-1zM762 265h1v1h-1zM762 250h1v1h-1zM762 235h1v1h-1zM762 219h1v1h-1zM762 204h1v1h-1zM762 189h1v1h-1zM762 174h1v1h-1zM762 159h1v1h-1zM762 144h1v1h-1zM762 129h1v1h-1zM762 114h1v1h-1z"/>
<path fill="none" stroke="#fff" stroke-width="1" d="M142.5 144.5 L520.5 144.5 L520.5 522.5 L142.5 522.5Z"/>
<path fill="#fff" d="M197 186h10v1h-10zM455 186h9v1h-9zM195 187h2v1h-2zM207 187h4v1h-4zM453 187h2v1h-2zM464 187h4v1h-4zM193 188h2v1h-2zM211 188h1v1h-1zM451 188h2v1h-2zM468 188h1v1h-1zM192 189h1v1h-1zM212 189h2v1h-2zM450 189h1v1h-1zM469 189h2v1h-2zM190 190h2v1h-2zM214 190h1v1h-1zM448 190h2v1h-2zM471 190h1v1h-1zM189 191h1v1h-1zM215 191h1v1h-1zM447 191h1v1h-1zM472 191h1v1h-1zM188 192h1v1h-1zM216 192h1v1h-1zM446 192h1v1h-1zM473 192h1v1h-1zM188 193h1v1h-1zM217 193h1v1h-1zM446 193h1v1h-1zM474 193h1v1h-1zM187 194h1v1h-1zM217 194h1v1h-1zM445 194h1v1h-1zM474 194h1v1h-1zM187 195h1v1h-1zM218 195h1v1h-1zM445 195h1v1h-1zM475 195h1v1h-1zM186 196h1v1h-1zM218 196h1v1h-1zM444 196h1v1h-1zM475 196h1v1h-1zM185 197h1v1h-1zM219 197h1v1h-1zM443 197h1v1h-1zM476 197h1v1h-1zM185 198h1v1h-1zM220 198h1v1h-1zM443 198h1v1h-1zM477 198h1v1h-1zM185 199h1v1h-1zM220 199h1v1h-1zM443 199h1v1h-1zM477 199h1v1h-1zM185 200h1v1h-1zM220 200h1v1h-1zM443 200h1v1h-1zM477 200h1v1h-1zM184 201h1v1h-1zM220 201h1v1h-1zM442 201h1v1h-1zM477 201h1v1h-1zM184 202h1v1h-1zM221 202h1v1h-1zM442 202h1v1h-1zM478 202h1v1h-1zM184 203h1v1h-1zM221 203h1v1h-1zM442 203h1v1h-1zM478 203h1v1h-1zM184 204h1v1h-1zM221 204h1v1h-1zM442 204h1v1h-1zM478 204h1v1h-1zM184 205h1v1h-1zM221 205h1v1h-1zM442 205h1v1h-1zM478 205h1v1h-1zM184 206h1v1h-1zM220 206h1v1h-1zM442 206h1v1h-1zM477 206h1v1h-1zM185 207h1v1h-1zM220 207h1v1h-1zM443 207h1v1h-1zM477 207h1v1h-1zM185 208h1v1h-1zM220 208h1v1h-1zM443 208h1v1h-1zM477 208h1v1h-1zM185 209h1v1h-1zM220 209h1v1h-1zM443 209h1v1h-1zM477 209h1v1h-1zM185 210h1v1h-1zM219 210h1v1h-1zM443 210h1v1h-1zM476 210h1v1h-1zM186 211h1v1h-1zM219 211h1v1h-1zM444 211h1v1h-1zM476 211h1v1h-1zM186 212h1v1h-1zM218 212h1v1h-1zM444 212h1v1h-1zM475 212h1v1h-1zM187 213h1v1h-1zM218 213h1v1h-1zM445 213h1v1h-1zM475 213h1v1h-1zM187 214h1v1h-1zM217 214h1v1h-1zM445 214h1v1h-1zM474 214h1v1h-1zM188 215h1v1h-1zM217 215h1v1h-1zM446 215h1v1h-1zM474 215h1v1h-1zM189 216h1v1h-1zM215 216h2v1h-2zM447 216h1v1h-1zM472 216h2v1h-2zM189 217h1v1h-1zM214 217h1v1h-1zM447 217h1v1h-1zM471 217h1v1h-1zM190 218h2v1h-2zM213 218h1v1h-1zM448 218h2v1h-2zM470 218h1v1h-1zM192 219h1v1h-1zM212 219h1v1h-1zM450 219h1v1h-1zM469 219h1v1h-1zM193 220h2v1h-2zM211 220h1v1h-1zM451 220h2v1h-2zM468 220h1v1h-1zM195 221h2v1h-2zM207 221h4v1h-4zM453 221h2v1h-2zM464 221h4v1h-4zM197 222h10v1h-10zM455 222h9v1h-9zM232 321h5v1h-5zM428 321h5v1h-5zM228 322h4v1h-4zM237 322h3v1h-3zM424 322h4v1h-4zM433 322h3v1h-3zM227 323h1v1h-1zM240 323h1v1h-1zM423 323h1v1h-1zM436 323h1v1h-1zM226 324h1v1h-1zM241 324h1v1h-1zM422 324h1v1h-1zM437 324h1v1h-1zM224 325h2v1h-2zM242 325h1v1h-1zM420 325h2v1h-2zM438 325h1v1h-1zM223 326h1v1h-1zM242 326h1v1h-1zM419 326h1v1h-1zM438 326h1v1h-1zM222 327h1v1h-1zM243 327h1v1h-1zM418 327h1v1h-1zM439 327h1v1h-1zM222 328h1v1h-1zM244 328h1v1h-1zM418 328h1v1h-1zM440 328h1v1h-1zM222 329h1v1h-1zM244 329h1v1h-1zM418 329h1v1h-1zM440 329h1v1h-1zM221 330h1v1h-1zM244 330h1v1h-1zM417 330h1v1h-1zM440 330h1v1h-1zM221 331h1v1h-1zM245 331h1v1h-1zM417 331h1v1h-1zM441 331h1v1h-1zM221 332h1v1h-1zM245 332h1v1h-1zM417 332h1v1h-1zM441 332h1v1h-1zM221 333h1v1h-1zM245 333h1v1h-1zM417 333h1v1h-1zM441 333h1v1h-1zM221 334h1v1h-1zM245 334h1v1h-1zM417 334h1v1h-1zM441 334h1v1h-1zM221 335h1v1h-1zM245 335h1v1h-1zM417 335h1v1h-1zM441 335h1v1h-1zM222 336h1v1h-1zM244 336h1v1h-1zM418 336h1v1h-1zM440 336h1v1h-1zM222 337h1v1h-1zM244 337h1v1h-1zM418 337h1v1h-1zM440 337h1v1h-1zM222 338h1v1h-1zM244 338h1v1h-1zM418 338h1v1h-1zM440 338h1v1h-1zM222 339h1v1h-1zM243 339h1v1h-1zM418 339h1v1h-1zM439 339h1v1h-1zM223 340h1v1h-1zM243 340h1v1h-1zM419 340h1v1h-1zM439 340h1v1h-1zM224 341h1v1h-1zM242 341h1v1h-1zM420 341h1v1h-1zM438 341h1v1h-1zM225 342h2v1h-2zM241 342h1v1h-1zM421 342h2v1h-2zM437 342h1v1h-1zM227 343h1v1h-1zM239 343h2v1h-2zM423 343h1v1h-1zM435 343h2v1h-2zM228 344h3v1h-3zM236 344h3v1h-3zM424 344h3v1h-3zM432 344h3v1h-3zM231 345h5v1h-5zM427 345h5v1h-5zM197 443h10v1h-10zM455 443h9v1h-9zM195 444h2v1h-2zM207 444h4v1h-4zM453 444h2v1h-2zM464 444h4v1h-4zM193 445h2v1h-2zM211 445h1v1h-1zM451 445h2v1h-2zM468 445h1v1h-1zM192 446h1v1h-1zM212 446h2v1h-2zM450 446h1v1h-1zM469 446h2v1h-2zM190 447h2v1h-2zM214 447h1v1h-1zM448 447h2v1h-2zM471 447h1v1h-1zM189 448h1v1h-1zM215 448h1v1h-1zM447 448h1v1h-1zM472 448h1v1h-1zM188 449h1v1h-1zM216 449h1v1h-1zM446 449h1v1h-1zM473 449h1v1h-1zM188 450h1v1h-1zM217 450h1v1h-1zM446 450h1v1h-1zM474 450h1v1h-1zM187 451h1v1h-1zM217 451h1v1h-1zM445 451h1v1h-1zM474 451h1v1h-1zM187 452h1v1h-1zM218 452h1v1h-1zM445 452h1v1h-1zM475 452h1v1h-1zM186 453h1v1h-1zM218 453h1v1h-1zM444 453h1v1h-1zM475 453h1v1h-1zM185 454h1v1h-1zM219 454h1v1h-1zM443 454h1v1h-1zM476 454h1v1h-1zM185 455h1v1h-1zM220 455h1v1h-1zM443 455h1v1h-1zM477 455h1v1h-1zM185 456h1v1h-1zM220 456h1v1h-1zM443 456h1v1h-1zM477 456h1v1h-1zM185 457h1v1h-1zM220 457h1v1h-1zM443 457h1v1h-1zM477 457h1v1h-1zM184 458h1v1h-1zM220 458h1v1h-1zM442 458h1v1h-1zM477 458h1v1h-1zM184 459h1v1h-1zM221 459h1v1h-1zM442 459h1v1h-1zM478 459h1v1h-1zM184 460h1v1h-1zM221 460h1v1h-1zM442 460h1v1h-1zM478 460h1v1h-1zM184 461h1v1h-1zM221 461h1v1h-1zM442 461h1v1h-1zM478 461h1v1h-1zM184 462h1v1h-1zM221 462h1v1h-1zM442 462h1v1h-1zM478 462h1v1h-1zM184 463h1v1h-1zM221 463h1v1h-1zM442 463h1v1h-1zM478 463h1v1h-1zM184 464h1v1h-1zM220 464h1v1h-1zM442 464h1v1h-1zM477 464h1v1h-1zM185 465h1v1h-1zM220 465h1v1h-1zM443 465h1v1h-1zM477 465h1v1h-1zM185 466h1v1h-1zM220 466h1v1h-1zM443 466h1v1h-1zM477 466h1v1h-1zM185 467h1v1h-1zM220 467h1v1h-1zM443 467h1v1h-1zM477 467h1v1h-1zM185 468h1v1h-1zM219 468h1v1h-1zM443 468h1v1h-1zM476 468h1v1h-1zM186 469h1v1h-1zM219 469h1v1h-1zM444 469h1v1h-1zM476 469h1v1h-1zM186 470h1v1h-1zM218 470h1v1h-1zM444 470h1v1h-1zM475 470h1v1h-1zM187 471h1v1h-1zM218 471h1v1h-1zM445 471h1v1h-1zM475 471h1v1h-1zM187 472h1v1h-1zM217 472h1v1h-1zM445 472h1v1h-1zM474 472h1v1h-1zM188 473h1v1h-1zM217 473h1v1h-1zM446 473h1v1h-1zM474 473h1v1h-1zM189 474h1v1h-1zM215 474h2v1h-2zM447 474h1v1h-1zM472 474h2v1h-2zM189 475h1v1h-1zM214 475h1v1h-1zM447 475h1v1h-1zM471 475h1v1h-1zM190 476h2v1h-2zM213 476h1v1h-1zM448 476h2v1h-2zM470 476h1v1h-1zM192 477h1v1h-1zM212 477h1v1h-1zM450 477h1v1h-1zM469 477h1v1h-1zM193 478h2v1h-2zM211 478h1v1h-1zM451 478h2v1h-2zM468 478h1v1h-1zM195 479h2v1h-2zM207 479h4v1h-4zM453 479h2v1h-2zM464 479h4v1h-4zM197 480h10v1h-10zM455 480h9v1h-9z"/>
<path fill="none" stroke="#fff" stroke-width="1" d="M277.5 312.5 L386.5 312.5 L386.5 353.5 L277.5 353.5Z"/>
<path fill="#fff" d="M297 238h1v1h-1zM295 239h72v1h-72zM294 240h1v1h-1zM367 240h1v1h-1zM293 241h1v1h-1zM368 241h1v1h-1zM293 242h1v1h-1zM368 242h1v1h-1zM292 243h2v1h-2zM368 243h2v1h-2zM293 244h1v1h-1zM368 244h1v1h-1zM294 245h1v1h-1zM367 245h1v1h-1zM295 246h2v1h-2zM365 246h2v1h-2zM297 247h69v1h-69zM286 253h37v1h-37zM339 253h37v1h-37zM286 254h1v1h-1zM322 254h1v1h-1zM339 254h1v1h-1zM375 254h1v1h-1zM286 255h1v1h-1zM323 255h1v1h-1zM339 255h1v1h-1zM376 255h1v1h-1zM286 256h1v1h-1zM323 256h1v1h-1zM339 256h1v1h-1zM376 256h1v1h-1zM286 257h1v1h-1zM324 257h1v1h-1zM339 257h1v1h-1zM376 257h1v1h-1zM286 258h1v1h-1zM323 258h2v1h-2zM339 258h1v1h-1zM376 258h1v1h-1zM286 259h1v1h-1zM323 259h1v1h-1zM339 259h1v1h-1zM376 259h1v1h-1zM286 260h1v1h-1zM322 260h1v1h-1zM339 260h1v1h-1zM375 260h1v1h-1zM287 261h2v1h-2zM320 261h2v1h-2zM340 261h2v1h-2zM373 261h2v1h-2zM289 262h32v1h-32zM342 262h31v1h-31zM294 268h74v1h-74zM294 269h1v1h-1zM367 269h1v1h-1zM293 270h1v1h-1zM368 270h1v1h-1zM293 271h1v1h-1zM368 271h1v1h-1zM293 272h1v1h-1zM368 272h2v1h-2zM294 273h1v1h-1zM368 273h1v1h-1zM294 274h1v1h-1zM367 274h1v1h-1zM295 275h72v1h-72zM297 389h1v1h-1zM295 390h72v1h-72zM294 391h1v1h-1zM367 391h1v1h-1zM293 392h1v1h-1zM368 392h1v1h-1zM293 393h1v1h-1zM368 393h1v1h-1zM292 394h2v1h-2zM368 394h2v1h-2zM293 395h1v1h-1zM368 395h1v1h-1zM294 396h1v1h-1zM367 396h1v1h-1zM295 397h2v1h-2zM365 397h2v1h-2zM297 398h69v1h-69zM287 404h35v1h-35zM340 404h35v1h-35zM286 405h1v1h-1zM322 405h1v1h-1zM339 405h1v1h-1zM375 405h1v1h-1zM286 406h1v1h-1zM323 406h1v1h-1zM339 406h1v1h-1zM376 406h1v1h-1zM286 407h1v1h-1zM323 407h1v1h-1zM339 407h1v1h-1zM376 407h1v1h-1zM286 408h1v1h-1zM324 408h1v1h-1zM339 408h1v1h-1zM376 408h1v1h-1zM286 409h1v1h-1zM324 409h1v1h-1zM339 409h1v1h-1zM376 409h1v1h-1zM286 410h1v1h-1zM323 410h1v1h-1zM339 410h1v1h-1zM376 410h1v1h-1zM286 411h1v1h-1zM322 411h1v1h-1zM339 411h1v1h-1zM375 411h1v1h-1zM287 412h2v1h-2zM322 412h1v1h-1zM340 412h2v1h-2zM375 412h1v1h-1zM289 413h33v1h-33zM342 413h33v1h-33zM297 418h1v1h-1zM295 419h72v1h-72zM294 420h1v1h-1zM367 420h1v1h-1zM293 421h1v1h-1zM368 421h1v1h-1zM293 422h1v1h-1zM368 422h1v1h-1zM292 423h2v1h-2zM368 423h2v1h-2zM293 424h1v1h-1zM368 424h1v1h-1zM294 425h1v1h-1zM367 425h1v1h-1zM295 426h2v1h-2zM365 426h2v1h-2zM297 427h69v1h-69z"/>
<path fill="#fff" d="M536 401h58v1h-58zM536 402h1v1h-1zM594 402h1v1h-1zM535 403h1v1h-1zM595 403h1v1h-1zM535 404h1v1h-1zM595 404h1v1h-1zM535 405h1v1h-1zM563 405h6v1h-6zM596 405h1v1h-1zM535 406h1v1h-1zM562 406h1v1h-1zM568 406h1v1h-1zM596 406h1v1h-1zM535 407h1v1h-1zM562 407h1v1h-1zM569 407h1v1h-1zM596 407h1v1h-1zM535 408h1v1h-1zM562 408h1v1h-1zM569 408h1v1h-1zM596 408h1v1h-1zM535 409h1v1h-1zM562 409h1v1h-1zM569 409h1v1h-1zM596 409h1v1h-1zM535 410h1v1h-1zM562 410h1v1h-1zM568 410h1v1h-1zM596 410h1v1h-1zM535 411h1v1h-1zM563 411h2v1h-2zM567 411h1v1h-1zM596 411h1v1h-1zM535 412h1v1h-1zM565 412h2v1h-2zM596 412h1v1h-1zM535 413h1v1h-1zM596 413h1v1h-1zM535 414h1v1h-1zM596 414h1v1h-1zM535 415h1v1h-1zM596 415h1v1h-1zM535 416h1v1h-1zM596 416h1v1h-1zM535 417h1v1h-1zM596 417h1v1h-1zM535 418h1v1h-1zM596 418h1v1h-1zM535 419h1v1h-1zM596 419h1v1h-1zM535 420h1v1h-1zM596 420h1v1h-1zM535 421h1v1h-1zM596 421h1v1h-1zM535 422h1v1h-1zM596 422h1v1h-1zM535 423h1v1h-1zM596 423h1v1h-1zM535 424h1v1h-1zM596 424h1v1h-1zM535 425h1v1h-1zM596 425h1v1h-1zM535 426h1v1h-1zM596 426h1v1h-1zM535 427h1v1h-1zM596 427h1v1h-1zM535 428h1v1h-1zM596 428h1v1h-1zM535 429h1v1h-1zM596 429h1v1h-1zM535 430h1v1h-1zM596 430h1v1h-1zM535 431h1v1h-1zM596 431h1v1h-1zM535 432h1v1h-1zM596 432h1v1h-1zM535 433h1v1h-1zM596 433h1v1h-1zM535 434h1v1h-1zM596 434h1v1h-1zM535 435h1v1h-1zM596 435h1v1h-1zM535 436h1v1h-1zM596 436h1v1h-1zM535 437h1v1h-1zM596 437h1v1h-1zM535 438h1v1h-1zM596 438h1v1h-1zM535 439h1v1h-1zM596 439h1v1h-1zM535 440h1v1h-1zM549 440h34v1h-34zM596 440h1v1h-1zM535 441h1v1h-1zM549 441h1v1h-1zM582 441h1v1h-1zM596 441h1v1h-1zM535 442h1v1h-1zM549 442h1v1h-1zM582 442h1v1h-1zM596 442h1v1h-1zM535 443h1v1h-1zM549 443h1v1h-1zM582 443h1v1h-1zM596 443h1v1h-1zM535 444h1v1h-1zM549 444h1v1h-1zM582 444h1v1h-1zM596 444h1v1h-1zM535 445h1v1h-1zM549 445h1v1h-1zM582 445h1v1h-1zM596 445h1v1h-1zM535 446h1v1h-1zM549 446h1v1h-1zM582 446h1v1h-1zM596 446h1v1h-1zM535 447h1v1h-1zM549 447h1v1h-1zM582 447h1v1h-1zM596 447h1v1h-1zM535 448h1v1h-1zM549 448h1v1h-1zM582 448h1v1h-1zM596 448h1v1h-1zM535 449h1v1h-1zM549 449h1v1h-1zM582 449h1v1h-1zM596 449h1v1h-1zM535 450h1v1h-1zM549 450h1v1h-1zM582 450h1v1h-1zM596 450h1v1h-1zM535 451h1v1h-1zM549 451h1v1h-1zM582 451h1v1h-1zM596 451h1v1h-1zM535 452h1v1h-1zM549 452h1v1h-1zM582 452h1v1h-1zM596 452h1v1h-1zM535 453h1v1h-1zM549 453h1v1h-1zM582 453h1v1h-1zM596 453h1v1h-1zM535 454h1v1h-1zM549 454h1v1h-1zM582 454h1v1h-1zM596 454h1v1h-1zM535 455h1v1h-1zM549 455h1v1h-1zM582 455h1v1h-1zM596 455h1v1h-1zM535 456h1v1h-1zM549 456h1v1h-1zM582 456h1v1h-1zM596 456h1v1h-1zM535 457h1v1h-1zM549 457h1v1h-1zM582 457h1v1h-1zM596 457h1v1h-1zM535 458h1v1h-1zM549 458h1v1h-1zM582 458h1v1h-1zM596 458h1v1h-1zM535 459h1v1h-1zM549 459h1v1h-1zM582 459h1v1h-1zM596 459h1v1h-1zM535 460h1v1h-1zM549 460h1v1h-1zM582 460h1v1h-1zM596 460h1v1h-1zM535 461h1v1h-1zM549 461h1v1h-1zM582 461h1v1h-1zM596 461h1v1h-1zM535 462h1v1h-1zM549 462h1v1h-1zM582 462h1v1h-1zM596 462h1v1h-1zM535 463h1v1h-1zM549 463h1v1h-1zM582 463h1v1h-1zM596 463h1v1h-1zM535 464h1v1h-1zM549 464h1v1h-1zM582 464h1v1h-1zM596 464h1v1h-1zM535 465h1v1h-1zM549 465h1v1h-1zM582 465h1v1h-1zM596 465h1v1h-1zM535 466h1v1h-1zM549 466h1v1h-1zM582 466h1v1h-1zM596 466h1v1h-1zM535 467h1v1h-1zM549 467h1v1h-1zM582 467h1v1h-1zM596 467h1v1h-1zM535 468h1v1h-1zM549 468h1v1h-1zM582 468h1v1h-1zM596 468h1v1h-1zM535 469h1v1h-1zM549 469h1v1h-1zM582 469h1v1h-1zM596 469h1v1h-1zM535 470h1v1h-1zM549 470h1v1h-1zM582 470h1v1h-1zM596 470h1v1h-1zM535 471h1v1h-1zM549 471h1v1h-1zM582 471h1v1h-1zM596 471h1v1h-1zM535 472h1v1h-1zM549 472h1v1h-1zM582 472h1v1h-1zM596 472h1v1h-1zM535 473h1v1h-1zM549 473h1v1h-1zM582 473h1v1h-1zM596 473h1v1h-1zM535 474h1v1h-1zM549 474h1v1h-1zM582 474h1v1h-1zM596 474h1v1h-1zM535 475h1v1h-1zM549 475h1v1h-1zM582 475h1v1h-1zM596 475h1v1h-1zM535 476h1v1h-1zM549 476h1v1h-1zM582 476h1v1h-1zM596 476h1v1h-1zM535 477h1v1h-1zM549 477h1v1h-1zM582 477h1v1h-1zM596 477h1v1h-1zM535 478h1v1h-1zM549 478h1v1h-1zM582 478h1v1h-1zM596 478h1v1h-1zM535 479h1v1h-1zM549 479h1v1h-1zM582 479h1v1h-1zM596 479h1v1h-1zM535 480h1v1h-1zM549 480h1v1h-1zM582 480h1v1h-1zM596 480h1v1h-1zM535 481h1v1h-1zM549 481h1v1h-1zM582 481h1v1h-1zM596 481h1v1h-1zM535 482h1v1h-1zM549 482h1v1h-1zM582 482h1v1h-1zM596 482h1v1h-1zM535 483h1v1h-1zM549 483h34v1h-34zM596 483h1v1h-1zM535 484h1v1h-1zM596 484h1v1h-1zM535 485h1v1h-1zM596 485h1v1h-1zM535 486h1v1h-1zM596 486h1v1h-1zM535 487h1v1h-1zM596 487h1v1h-1zM535 488h1v1h-1zM596 488h1v1h-1zM535 489h1v1h-1zM596 489h1v1h-1zM535 490h1v1h-1zM596 490h1v1h-1zM535 491h1v1h-1zM596 491h1v1h-1zM535 492h1v1h-1zM596 492h1v1h-1zM535 493h1v1h-1zM596 493h1v1h-1zM535 494h1v1h-1zM596 494h1v1h-1zM535 495h1v1h-1zM596 495h1v1h-1zM535 496h1v1h-1zM596 496h1v1h-1zM535 497h1v1h-1zM596 497h1v1h-1zM535 498h1v1h-1zM596 498h1v1h-1zM535 499h1v1h-1zM596 499h1v1h-1zM535 500h1v1h-1zM596 500h1v1h-1zM535 501h1v1h-1zM596 501h1v1h-1zM535 502h1v1h-1zM596 502h1v1h-1zM535 503h1v1h-1zM596 503h1v1h-1zM535 504h1v1h-1zM596 504h1v1h-1zM535 505h1v1h-1zM596 505h1v1h-1zM535 506h1v1h-1zM596 506h1v1h-1zM535 507h1v1h-1zM596 507h1v1h-1zM535 508h1v1h-1zM596 508h1v1h-1zM535 509h1v1h-1zM596 509h1v1h-1zM535 510h1v1h-1zM596 510h1v1h-1zM535 511h1v1h-1zM563 511h6v1h-6zM596 511h1v1h-1zM535 512h1v1h-1zM562 512h1v1h-1zM568 512h1v1h-1zM596 512h1v1h-1zM535 513h1v1h-1zM562 513h1v1h-1zM569 513h1v1h-1zM596 513h1v1h-1zM535 514h1v1h-1zM562 514h1v1h-1zM569 514h1v1h-1zM596 514h1v1h-1zM535 515h1v1h-1zM562 515h1v1h-1zM568 515h1v1h-1zM596 515h1v1h-1zM535 516h1v1h-1zM562 516h1v1h-1zM568 516h1v1h-1zM596 516h1v1h-1zM535 517h1v1h-1zM563 517h2v1h-2zM567 517h1v1h-1zM596 517h1v1h-1zM535 518h1v1h-1zM565 518h2v1h-2zM595 518h2v1h-2zM535 519h1v1h-1zM595 519h1v1h-1zM536 520h1v1h-1zM594 520h1v1h-1zM537 521h2v1h-2zM594 521h1v1h-1zM539 522h55v1h-55z"/>
<path fill="#f00" d="M142 502h1v41h-1zM122 522h41v1h-41z"/>
</svg>
<svg width="776" height="584" viewBox="0 0 776 584">
<circle cx="16" cy="7.3" r="6.9" fill="none" stroke="#7ccd0f" stroke-width="2"/>
<rect x="8" y="0" width="2" height="1.5" fill="#7ccd0f"/><rect x="22" y="0" width="2" height="1.5" fill="#7ccd0f"/>
<rect x="8" y="13" width="2" height="2" fill="#7ccd0f"/><rect x="22" y="13" width="2" height="2" fill="#7ccd0f"/>
<rect x="8" y="5" width="4" height="4" fill="#2b2b30"/><rect x="11" y="6" width="13" height="2" fill="#2b2b30"/>
<path d="M1.5 39.5V27.5H8.5L9.5 28.5V39.5Z" fill="#fff" stroke="#7a7a7a"/>
<circle cx="8.3" cy="33.6" r="2.4" fill="#fff" stroke="#000" stroke-width="1.4"/>
<path d="M10 35.3L13.4 38.2" stroke="#000" stroke-width="2.2"/>
<path d="M16.5 70.5V52.5Q16.5 51.5 17.5 51.5H25Q28.5 51.5 28.5 55V70.5Z" fill="#fff" stroke="#3a3434"/><path d="M17 70V53Q17 52 18 52H24Q26 52 26 55V70Z" fill="#00ff80"/>
<rect x="25" y="60" width="9" height="3" fill="#000"/><rect x="28" y="57" width="3" height="9" fill="#000"/>
<path d="M47.5 70.5V52.5Q47.5 51.5 48.5 51.5H56Q59.5 51.5 59.5 55V70.5Z" fill="#fff" stroke="#3a3434"/><path d="M48 70V53Q48 52 49 52H55Q57 52 57 55V70Z" fill="#00ff80"/>
<rect x="48" y="65" width="10" height="1" fill="#08a050"/><rect x="48" y="68" width="10" height="1" fill="#08a050"/><rect x="55" y="65" width="1" height="5" fill="#107040"/>
<rect x="56" y="60" width="9" height="3" fill="#000"/><rect x="59" y="57" width="3" height="9" fill="#000"/>
<path d="M78.5 68.5V55.5Q78.5 54.5 79.5 54.5H84.5L86 56H91.5V60H83Z" fill="#00ff80" stroke="#222" stroke-linejoin="round"/>
<path d="M78.5 68.5L83 61.2L96.5 60.2L90 68.5Z" fill="#f6f6f6" stroke="#555" stroke-linejoin="round"/>
<path d="M109.5 52.5H126.5V69.5H112.5L109.5 66.5Z" fill="#fff" stroke="#333"/><path d="M112.5 52.5V59Q112.5 60.5 114 60.5H122Q123.5 60.5 123.5 59V52.5Z" fill="#00ff80" stroke="#333"/><path d="M113.5 69.5V64.5Q113.5 63.5 114.5 63.5H121.5Q122.5 63.5 122.5 64.5V69.5" fill="#00ff80" stroke="#333"/><rect x="116" y="65" width="2" height="3" fill="#444"/>
<path d="M140.5 52.5H157.5V69.5H143.5L140.5 66.5Z" fill="#fff" stroke="#333"/><path d="M143.5 52.5V59Q143.5 60.5 145 60.5H153Q154.5 60.5 154.5 59V52.5Z" fill="#00ff80" stroke="#333"/><path d="M144.5 69.5V64.5Q144.5 63.5 145.5 63.5H152.5Q153.5 63.5 153.5 64.5V69.5" fill="#00ff80" stroke="#333"/><rect x="147" y="65" width="2" height="3" fill="#444"/>
<rect x="175.5" y="51.5" width="9" height="7" rx="1" fill="#00ff80" stroke="#222"/>
<rect x="171" y="58" width="18" height="9.5" fill="#000"/>
<path d="M176.5 60H184L186 63H174.5Z" fill="#fff"/>
<path d="M175 65.5H185.5L187.5 69.5H173Z" fill="#00ff80" stroke="#222" stroke-width="0.8"/>
<path d="M202.5 70.5V52.5Q202.5 51.5 203.5 51.5H211Q214.5 51.5 214.5 55V70.5Z" fill="#fff" stroke="#3a3434"/><path d="M203 70V53Q203 52 204 52H210Q212 52 212 55V70Z" fill="#00ff80"/>
<rect x="210.5" y="56.5" width="6" height="4" fill="#00ff80" stroke="#111"/>
<rect x="208" y="60" width="12" height="6.5" fill="#000"/><rect x="211" y="62" width="6" height="2" rx="0.8" fill="#fff"/>
<rect x="211" y="65.5" width="7" height="2" fill="#00ff80"/>
<path d="M250.5 54V64.5L252.8 62.3L255.3 68L257 67.2L254.8 61.7L258 61.5Z" fill="#fff" stroke="#777" stroke-linejoin="round"/>
<path d="M281.5 70.5V54.5Q281.5 52.5 283.5 52.5H291.5Q292.5 52.5 292.5 53.5V70.5Z" fill="#fafafa" stroke="#8a8a8a"/><rect x="282.3" y="53.5" width="9.2" height="17" fill="#c4c4c4"/>
<path d="M288.5 69.5V52.5Q288.5 51.5 289.5 51.5H297.0Q300.5 51.5 300.5 55.0V69.5Z" fill="#fafafa" stroke="#8a8a8a"/><rect x="289.3" y="53" width="7.7" height="16.5" fill="#c4c4c4"/>
<path d="M286 61.5L291.6 57L290.9 59.9H296.5V63.1H290.9L291.6 66Z" fill="#fff" stroke="#8a8a8a" stroke-width="0.9" stroke-linejoin="round"/>
<path d="M321.5 69.5V52.5Q321.5 51.5 322.5 51.5H329.0Q332.5 51.5 332.5 55.0V69.5Z" fill="#fafafa" stroke="#8a8a8a"/><rect x="322.3" y="53" width="6.7" height="16.5" fill="#c4c4c4"/>
<path d="M312.5 70.5V54.5Q312.5 52.5 314.5 52.5H322.5Q323.5 52.5 323.5 53.5V70.5Z" fill="#fafafa" stroke="#8a8a8a"/><rect x="313.3" y="54" width="6.7" height="16.5" fill="#c4c4c4"/>
<path d="M327 61.5L321.4 57L322.1 59.9H316.5V63.1H322.1L321.4 66Z" fill="#fff" stroke="#8a8a8a" stroke-width="0.9" stroke-linejoin="round"/>
<path d="M350.5 70V55Q350.5 51.5 354 51.5H359Q362.5 51.5 362.5 55V58" fill="none" stroke="#111" stroke-width="1.3" stroke-dasharray="3 2"/>
<path d="M350.5 66V70.5H361" fill="none" stroke="#111" stroke-width="1.3" stroke-dasharray="3 2"/>
<path d="M361 58.3L364.6 65.8M365.8 58.3L362.4 65.8" stroke="#333" stroke-width="0.8"/><path d="M363.4 57.5V64" stroke="#222" stroke-width="0.9"/>
<circle cx="361.9" cy="67.9" r="1.6" fill="none" stroke="#111" stroke-width="1.1"/><circle cx="365.6" cy="67.6" r="1.6" fill="none" stroke="#111" stroke-width="1.1"/>
<path d="M389.5 69.5V52.5Q389.5 51.5 390.5 51.5H397Q400.5 51.5 400.5 55V69.5Z" fill="#fff" stroke="#3a3434"/><path d="M390 69V53Q390 52 391 52H396Q398 52 398 55V69Z" fill="#00ff80"/>
<path d="M380.5 70.5V53.5Q380.5 52.5 381.5 52.5H388Q391.5 52.5 391.5 56V70.5Z" fill="#fff" stroke="#3a3434"/><path d="M381 70V54Q381 53 382 53H387Q389 53 389 56V70Z" fill="#00ff80"/>
<path d="M420.5 69.5V52.5Q420.5 51.5 421.5 51.5H428Q431.5 51.5 431.5 55V69.5Z" fill="#fff" stroke="#3a3434"/><path d="M421 69V53Q421 52 422 52H427Q429 52 429 55V69Z" fill="#00ff80"/>
<path d="M411.5 70.5V53.5Q411.5 52.5 412.5 52.5H419Q422.5 52.5 422.5 56V70.5Z" fill="#fff" stroke="#3a3434"/><path d="M412 70V54Q412 53 413 53H418Q420 53 420 56V70Z" fill="#00ff80"/>
<rect x="418" y="60" width="9" height="3" fill="#000"/><rect x="421" y="57" width="3" height="9" fill="#000"/>
<path d="M459.5 53V72M464.5 53V72M469.5 53V72M455 57.5H474M455 62.5H474M455 67.5H474" stroke="#222" stroke-width="1"/>
<path d="M487.5 51V55.5M487.5 58V62.5M485 68.5H490M487.5 66V71M492 68.5H497M499.5 68.5H505" stroke="#000" stroke-width="1.6"/>
<path d="M492.51173659940235 63.187337826286296L504.2 52.0" stroke="#2a2a2a" stroke-width="3.8"/><path d="M492.872945443059 62.84160936164353L503.76654938761203 52.41487415757132" stroke="#f4f4f4" stroke-width="2.2"/><path d="M492.5617898248805 62.516521402352566L503.45539376943356 52.08978619828036" stroke="#3ceb8e" stroke-width="1.3"/><path d="M490.2 65.4L493.82550476504485 64.55993143218146L491.19796843375985 61.81474422039113Z" fill="#333"/><path d="M490.2 65.4L492.1226630735208 64.80555344586797L490.8780406008068 63.50520160870413Z" fill="#000"/>
<path d="M147.31672155609698 56.707442237413154L155.6 64.6" stroke="#2a2a2a" stroke-width="3.8"/><path d="M147.67870929923714 57.05235508700896L155.1656147082318 64.18610458048502" stroke="#f4f4f4" stroke-width="2.2"/><path d="M147.98913086387336 56.726566118182824L155.47603627286801 63.86031561165888" stroke="#3ceb8e" stroke-width="1.3"/><path d="M145.0 54.5L146.00605272763292 58.082995661345734L148.62739038456104 55.331888813480575Z" fill="#333"/><path d="M145.0 54.5L145.6823127460321 56.39326419619718L146.923999004577 55.090108320892625Z" fill="#000"/>
<path d="M525.520837797382 62.496885859006994L537.0 51.6" stroke="#2a2a2a" stroke-width="3.8"/><path d="M525.8834687032229 62.152649274476836L536.5648429129909 52.01308390143619" stroke="#f4f4f4" stroke-width="2.2"/><path d="M525.5736557771457 61.82628145922L536.2550299869138 51.68671608617935" stroke="#3ceb8e" stroke-width="1.3"/><path d="M523.2 64.7L526.8289368185966 63.87488330120252L524.2127387761674 61.118888416811465Z" fill="#333"/><path d="M523.2 64.7L525.1250971131817 64.1134839262051L523.8858454088731 62.80801266517777Z" fill="#000"/>
<path d="M530.2 65.3A5.3 5.3 0 1 0 535.5 59.8" fill="none" stroke="#333" stroke-width="1.2"/>
<path d="M533.5 57.5L533.8 62.3L536.5 60Z" fill="#111"/>
<circle cx="562.9" cy="60.7" r="3.05" fill="#f4f4f4" stroke="#222" stroke-width="1.05"/><path d="M565.3566549999999 63.156655L569.8 67.6" stroke="#000" stroke-width="1.7"/>
<path d="M562.9 51.6L565.9 55.5L559.9 55.5Z" fill="#00ff80" stroke="#1a3a20" stroke-width="0.8" stroke-linejoin="round"/><path d="M562.9 70L565.9 66.2L559.9 66.2Z" fill="#00ff80" stroke="#1a3a20" stroke-width="0.8" stroke-linejoin="round"/><path d="M553.6 60.7L557.6 57.7L557.6 63.7Z" fill="#00ff80" stroke="#1a3a20" stroke-width="0.8" stroke-linejoin="round"/><path d="M572.3 60.7L568.3 57.7L568.3 63.7Z" fill="#00ff80" stroke="#1a3a20" stroke-width="0.8" stroke-linejoin="round"/>
<circle cx="593.9" cy="60.7" r="3.05" fill="#f4f4f4" stroke="#222" stroke-width="1.05"/><path d="M596.3566549999999 63.156655L600.8 67.6" stroke="#000" stroke-width="1.7"/>
<path d="M593.9 55.6L596.9 51.6L590.9 51.6Z" fill="#00ff80" stroke="#1a3a20" stroke-width="0.8" stroke-linejoin="round"/><path d="M593.9 66.2L596.9 70.2L590.9 70.2Z" fill="#00ff80" stroke="#1a3a20" stroke-width="0.8" stroke-linejoin="round"/><path d="M588.3 60.7L584.3 57.7L584.3 63.7Z" fill="#00ff80" stroke="#1a3a20" stroke-width="0.8" stroke-linejoin="round"/><path d="M599.7 60.7L603.7 57.7L603.7 63.7Z" fill="#00ff80" stroke="#1a3a20" stroke-width="0.8" stroke-linejoin="round"/>
<circle cx="624.9" cy="60.7" r="3.05" fill="#f4f4f4" stroke="#222" stroke-width="1.05"/><path d="M627.3566549999999 63.156655L631.8 67.6" stroke="#000" stroke-width="1.7"/>
<path d="M621.8 57.6L617.5 53.3M628 57.6L632.5 53.3M621.8 63.8L617.5 68.1" stroke="#222" stroke-width="1"/>
<path d="M615.3 51.3L620 52.5L616.5 56Z" fill="#00ff80" stroke="#1a3a20" stroke-width="0.8" stroke-linejoin="round"/><path d="M634.7 51.3L630 52.5L633.5 56Z" fill="#00ff80" stroke="#1a3a20" stroke-width="0.8" stroke-linejoin="round"/><path d="M615.3 70.5L616.5 65.8L620 69.3Z" fill="#00ff80" stroke="#1a3a20" stroke-width="0.8" stroke-linejoin="round"/>
<circle cx="657.7" cy="55.3" r="3.05" fill="#f4f4f4" stroke="#222" stroke-width="1.05"/><path d="M660.156655 57.756654999999995L664.6 62.2" stroke="#000" stroke-width="1.7"/>
<path d="M657.5 69.5A5.4 5.4 0 0 0 649 62.5L648.7 64" fill="none" stroke="#333" stroke-width="1.2"/>
<path d="M646.5 64.5L651 64.8L648.5 67.2Z" fill="#000"/>
<rect x="677.5" y="54.5" width="16" height="16" fill="#fff" stroke="#cfcfcf"/>
<path d="M694.2 51V56.3M691.5 53.6H697" stroke="#333" stroke-width="1.3"/>
<circle cx="688.6" cy="60.5" r="3.05" fill="#f4f4f4" stroke="#222" stroke-width="1.05"/><path d="M691.056655 62.956655L695.7 67.4" stroke="#000" stroke-width="1.7"/>
<circle cx="720.5" cy="55.3" r="3.05" fill="#f4f4f4" stroke="#222" stroke-width="1.05"/><path d="M722.956655 57.756654999999995L727.6 62.5" stroke="#000" stroke-width="1.7"/>
<path d="M715.6 54L718.2 57H716.6V59.8H719.6V58.2L722.8 61.4L719.6 64.6V63H716.6V65.8H718.2L715.6 68.8L713 65.8H714.6V63H711.6V64.6L708.4 61.4L711.6 58.2V59.8H714.6V57H713Z" fill="#00ff80" stroke="#2a6a40" stroke-width="0.5"/>
<path d="M109.5 89H117.5L113.5 93Z" fill="#000"/>
<path d="M222.5 89H230.5L226.5 93Z" fill="#000"/>
<path d="M347.5 89H355.5L351.5 93Z" fill="#000"/>
<rect x="128" y="88" width="16" height="6" fill="#fff"/><rect x="128" y="90" width="16" height="1.3" fill="#8a8a8a"/>
<rect x="241" y="88" width="16" height="6" fill="#fff"/><rect x="241" y="90" width="16" height="1.3" fill="#8a8a8a"/>
<path d="M5 48h1v1h-1zM4 49h2v1h-2z" fill="#a8a8a8"/><path d="M5 52h1v1h-1zM4 53h2v1h-2z" fill="#a8a8a8"/><path d="M5 56h1v1h-1zM4 57h2v1h-2z" fill="#a8a8a8"/><path d="M5 60h1v1h-1zM4 61h2v1h-2z" fill="#a8a8a8"/><path d="M5 64h1v1h-1zM4 65h2v1h-2z" fill="#a8a8a8"/><path d="M5 68h1v1h-1zM4 69h2v1h-2z" fill="#a8a8a8"/><path d="M5 72h1v1h-1zM4 73h2v1h-2z" fill="#a8a8a8"/>
<path d="M234 48h1v1h-1zM233 49h2v1h-2z" fill="#a8a8a8"/><path d="M234 52h1v1h-1zM233 53h2v1h-2z" fill="#a8a8a8"/><path d="M234 56h1v1h-1zM233 57h2v1h-2z" fill="#a8a8a8"/><path d="M234 60h1v1h-1zM233 61h2v1h-2z" fill="#a8a8a8"/><path d="M234 64h1v1h-1zM233 65h2v1h-2z" fill="#a8a8a8"/><path d="M234 68h1v1h-1zM233 69h2v1h-2z" fill="#a8a8a8"/><path d="M234 72h1v1h-1zM233 73h2v1h-2z" fill="#a8a8a8"/>
<path d="M444 48h1v1h-1zM443 49h2v1h-2z" fill="#a8a8a8"/><path d="M444 52h1v1h-1zM443 53h2v1h-2z" fill="#a8a8a8"/><path d="M444 56h1v1h-1zM443 57h2v1h-2z" fill="#a8a8a8"/><path d="M444 60h1v1h-1zM443 61h2v1h-2z" fill="#a8a8a8"/><path d="M444 64h1v1h-1zM443 65h2v1h-2z" fill="#a8a8a8"/><path d="M444 68h1v1h-1zM443 69h2v1h-2z" fill="#a8a8a8"/><path d="M444 72h1v1h-1zM443 73h2v1h-2z" fill="#a8a8a8"/>
<path d="M5 82h1v1h-1zM4 83h2v1h-2z" fill="#a8a8a8"/><path d="M5 86h1v1h-1zM4 87h2v1h-2z" fill="#a8a8a8"/><path d="M5 90h1v1h-1zM4 91h2v1h-2z" fill="#a8a8a8"/><path d="M5 94h1v1h-1zM4 95h2v1h-2z" fill="#a8a8a8"/><path d="M5 98h1v1h-1zM4 99h2v1h-2z" fill="#a8a8a8"/>
<path d="M368 82h1v1h-1zM367 83h2v1h-2z" fill="#a8a8a8"/><path d="M368 86h1v1h-1zM367 87h2v1h-2z" fill="#a8a8a8"/><path d="M368 90h1v1h-1zM367 91h2v1h-2z" fill="#a8a8a8"/><path d="M368 94h1v1h-1zM367 95h2v1h-2z" fill="#a8a8a8"/><path d="M368 98h1v1h-1zM367 99h2v1h-2z" fill="#a8a8a8"/>
<path d="M5 108h1v1h-1zM4 109h2v1h-2z" fill="#a8a8a8"/><path d="M9 108h1v1h-1zM8 109h2v1h-2z" fill="#a8a8a8"/><path d="M13 108h1v1h-1zM12 109h2v1h-2z" fill="#a8a8a8"/><path d="M17 108h1v1h-1zM16 109h2v1h-2z" fill="#a8a8a8"/><path d="M21 108h1v1h-1zM20 109h2v1h-2z" fill="#a8a8a8"/><path d="M25 108h1v1h-1zM24 109h2v1h-2z" fill="#a8a8a8"/><path d="M29 108h1v1h-1zM28 109h2v1h-2z" fill="#a8a8a8"/>
<path d="M5 389h1v1h-1zM4 390h2v1h-2z" fill="#a8a8a8"/><path d="M9 389h1v1h-1zM8 390h2v1h-2z" fill="#a8a8a8"/><path d="M13 389h1v1h-1zM12 390h2v1h-2z" fill="#a8a8a8"/><path d="M17 389h1v1h-1zM16 390h2v1h-2z" fill="#a8a8a8"/><path d="M21 389h1v1h-1zM20 390h2v1h-2z" fill="#a8a8a8"/><path d="M25 389h1v1h-1zM24 390h2v1h-2z" fill="#a8a8a8"/><path d="M29 389h1v1h-1zM28 390h2v1h-2z" fill="#a8a8a8"/>
<path d="M8.5 120.5L25.5 137" stroke="#2a2a2a" stroke-width="0.85"/><path d="M24 137H29.5L26.75 140Z" fill="#000"/>
<circle cx="17" cy="158.9" r="8.6" fill="none" stroke="#484848" stroke-width="1.3"/><path d="M24 167H29.5L26.75 170Z" fill="#000"/>
<path d="M8.2 183C10 180.5 12.5 179.5 13.5 181.5C15 184.5 13.5 196 15.8 196.8C18.5 197.5 19 182 22 182C25.5 182 25.5 190 25.5 196" fill="none" stroke="#484848" stroke-width="1.3"/><path d="M24 197H29.5L26.75 200Z" fill="#000"/>
<ellipse cx="16.7" cy="218.9" rx="9.3" ry="6.6" transform="rotate(-42 16.7 218.9)" fill="none" stroke="#484848" stroke-width="1.3"/><path d="M24 227H29.5L26.75 230Z" fill="#000"/>
<path d="M12.3 244.2C9.5 245.5 8.2 247 8.2 249C8.2 251.5 10 253.3 12.5 253.3H25.7" fill="none" stroke="#484848" stroke-width="1.3"/><path d="M24 257H29.5L26.75 260Z" fill="#000"/>
<rect x="9.5" y="271.5" width="15" height="8" rx="1.5" fill="none" stroke="#7a7a7a" stroke-width="1.4"/>
<path d="M11.2 281.3L17 283.4L15.2 285.1L18.7 288.3L17.4 289.6L13.9 286.3L12.6 288.1Z" fill="#fff" stroke="#555" stroke-width="0.9" stroke-linejoin="round"/>
<circle cx="9.8" cy="280" r="1.9" fill="#00ff80" stroke="#1a6030" stroke-width="0.6"/><path d="M24 287H29.5L26.75 290Z" fill="#000"/>
<path d="M9 306.5V316M25 306.5V316" stroke="#555" stroke-width="1.2"/>
<path d="M10 311H24" stroke="#1a7a40" stroke-width="1"/><path d="M10 311L13 309V313Z" fill="#1a7a40"/><path d="M24 311L21 309V313Z" fill="#1a7a40"/>
<path d="M14.5 308.8L17.2 302L19.9 308.8M15.5 306.6H18.9" fill="none" stroke="#222" stroke-width="1.1"/><path d="M24 317H29.5L26.75 320Z" fill="#000"/>
<path d="M21.5 331.5A8.3 8.3 0 1 0 24.5 342" fill="none" stroke="#444" stroke-width="1.1"/>
<path d="M20.5 329.5L24 331.5L21 333.5Z" fill="#222"/>
<path d="M16.6 333.5L18.3 335.5H17.3V338H19.8V337L21.8 338.8L19.8 340.6V339.6H17.3V342H18.3L16.6 344L14.9 342H15.9V339.6H13.4V340.6L11.4 338.8L13.4 337V338H15.9V335.5H14.9Z" fill="#00ff80" stroke="#2a7a45" stroke-width="0.4"/><path d="M24 347H29.5L26.75 350Z" fill="#000"/>
<path d="M9 360.5V367.5M25 360.5V367.5" stroke="#555" stroke-width="1.2"/>
<path d="M10 364H24" stroke="#1a7a40"/><path d="M10 364L12.5 362.3V365.7Z" fill="#1a7a40"/><path d="M24 364L21.5 362.3V365.7Z" fill="#1a7a40"/>
<rect x="9" y="370" width="16" height="6.5" fill="#00ff80" stroke="#333" stroke-width="0.9"/>
<path d="M12 370.5V373M15 370.5V372M18 370.5V373M21 370.5V372" stroke="#333" stroke-width="0.8"/><path d="M24 377H29.5L26.75 380Z" fill="#000"/>
<path d="M8.6 418.6L14 404.2H16L21.4 418.6M11.3 412.4H18.7" fill="none" stroke="#111" stroke-width="1.7"/>
<path d="M21.5 402.6H26M23.8 402.6V419.3M21.5 419.3H26" fill="none" stroke="#333" stroke-width="0.9"/>
<rect x="7.5" y="431.5" width="18.5" height="18.5" rx="1" fill="#fff" stroke="#aaa"/>
<path d="M8 433L25 450M8 439L19 450M8 445L13 450M14 432L26 444M20 432L26 438" stroke="#444" stroke-width="0.8"/>
<path d="M9.5 474.5V464.5H13L14.5 462.5H19L20.5 464.5H24.5V474.5Z" fill="#fff" stroke="#666"/>
<circle cx="17" cy="470" r="3.2" fill="#00ff80"/><path d="M12 464.5V474.5M22 464.5V474.5" stroke="#999" stroke-width="0.6"/>
<path d="M9.5 501V493.5H24.5V502" fill="none" stroke="#555" stroke-width="1.1"/><path d="M15 502.5H22" stroke="#555" stroke-width="1.1"/>
<circle cx="11" cy="504.3" r="3.9" fill="#f0f0f0" stroke="#444" stroke-width="1"/>
<circle cx="24.2" cy="502.7" r="2.1" fill="#00ff80" stroke="#2a6a40" stroke-width="0.6"/>
<circle cx="16.9" cy="530.7" r="2.3" fill="#00ff80" stroke="#2a7a45" stroke-width="0.6"/>
</svg>
</body></html>
